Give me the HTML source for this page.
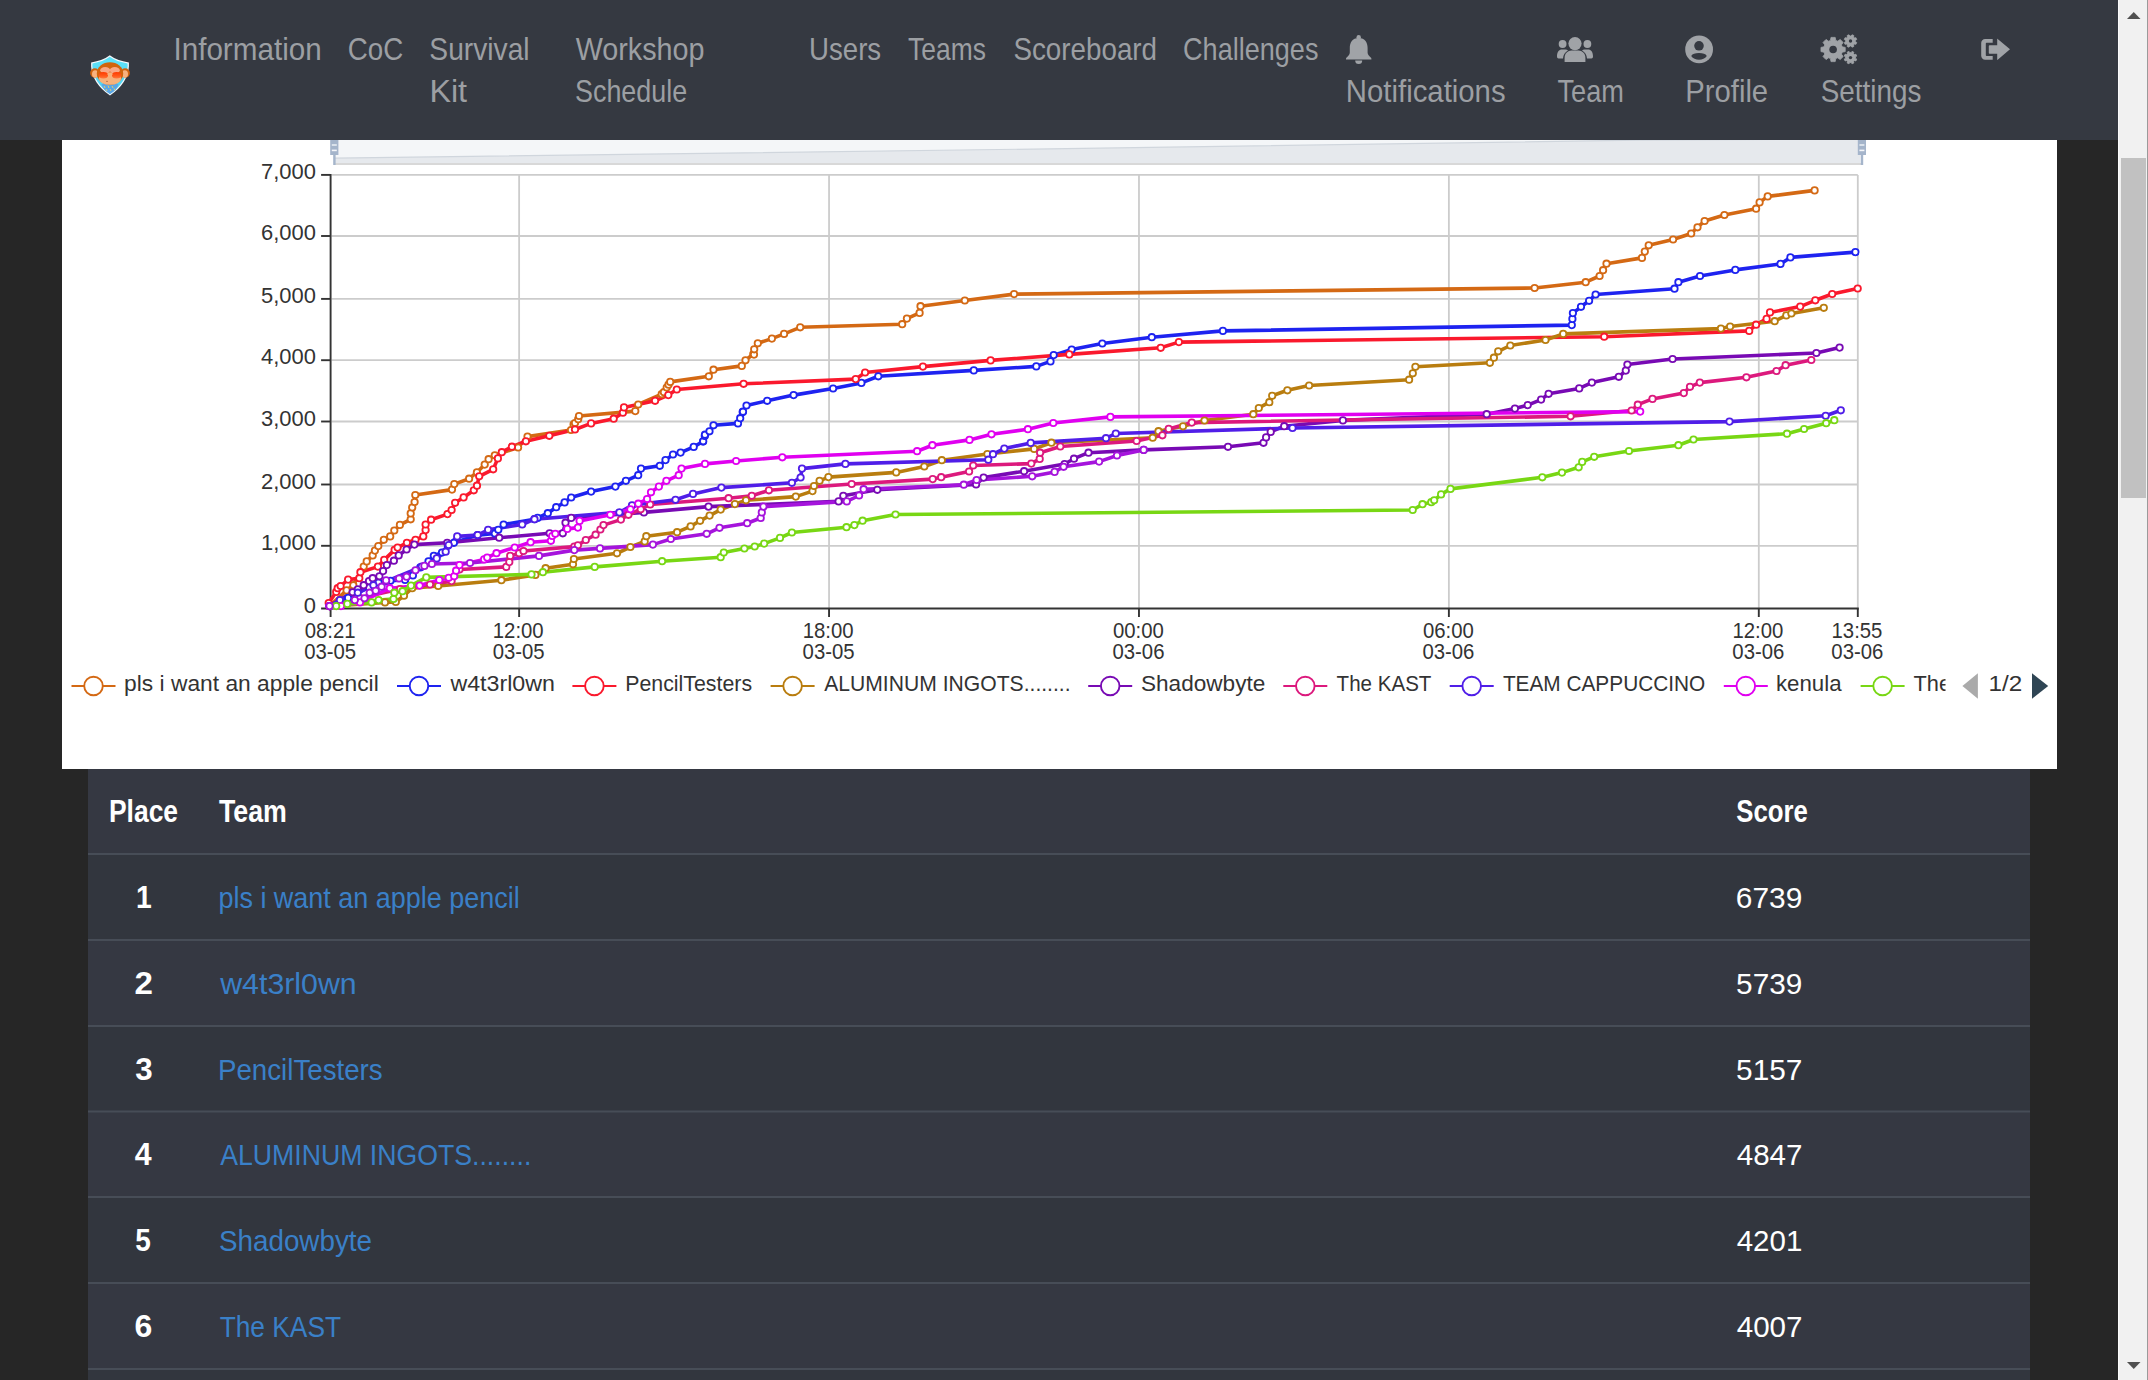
<!DOCTYPE html>
<html><head><meta charset="utf-8"><title>Scoreboard</title><style>
html,body{margin:0;padding:0;width:2148px;height:1380px;overflow:hidden;background:#262626}
svg{position:absolute;left:0;top:0;display:block}
text{font-family:"Liberation Sans", sans-serif;white-space:pre}
</style></head><body>
<svg width="2148" height="1380" viewBox="0 0 2148 1380">
<rect x="0" y="0" width="2118" height="1380" fill="#262626"/>
<rect x="62" y="140" width="1995" height="629" fill="#ffffff"/>
<rect x="88" y="769" width="1942" height="611" fill="#353842"/>
<rect x="335" y="138" width="1526" height="27" fill="#f4f6f8"/>
<path d="M335,158.2 L1100,148.2 L1640,140.2 L1860,139 L1860,164 L335,164 Z" fill="#e6e9ed"/>
<path d="M335,158.2 L1100,148.2 L1640,140.2 L1860,139" stroke="#d0d6dd" stroke-width="1.2" fill="none"/>
<rect x="335" y="163" width="1526" height="2" fill="#d8d8d8"/>
<rect x="330.2" y="136" width="8.2" height="19" fill="#a5b5cb"/>
<rect x="333.2" y="150" width="2.4" height="15" fill="#a5b5cb"/>
<rect x="331.8" y="144.2" width="5" height="1.6" fill="#e8edf3"/>
<rect x="331.8" y="149.6" width="5" height="1.6" fill="#f4f6f9"/>
<rect x="1857.8" y="136" width="8.2" height="19" fill="#a5b5cb"/>
<rect x="1860.8" y="150" width="2.4" height="15" fill="#a5b5cb"/>
<rect x="1859.3999999999999" y="144.2" width="5" height="1.6" fill="#e8edf3"/>
<rect x="1859.3999999999999" y="149.6" width="5" height="1.6" fill="#f4f6f9"/>
<line x1="331.6" y1="545.80" x2="1857.8" y2="545.80" stroke="#cccccc" stroke-width="1.8"/>
<line x1="331.6" y1="484.50" x2="1857.8" y2="484.50" stroke="#cccccc" stroke-width="1.8"/>
<line x1="331.6" y1="421.50" x2="1857.8" y2="421.50" stroke="#cccccc" stroke-width="1.8"/>
<line x1="331.6" y1="360.20" x2="1857.8" y2="360.20" stroke="#cccccc" stroke-width="1.8"/>
<line x1="331.6" y1="298.90" x2="1857.8" y2="298.90" stroke="#cccccc" stroke-width="1.8"/>
<line x1="331.6" y1="236.00" x2="1857.8" y2="236.00" stroke="#cccccc" stroke-width="1.8"/>
<line x1="331.6" y1="174.90" x2="1857.8" y2="174.90" stroke="#cccccc" stroke-width="1.8"/>
<line x1="519.13" y1="174.90" x2="519.13" y2="608.50" stroke="#cccccc" stroke-width="1.8"/>
<line x1="829.05" y1="174.90" x2="829.05" y2="608.50" stroke="#cccccc" stroke-width="1.8"/>
<line x1="1138.97" y1="174.90" x2="1138.97" y2="608.50" stroke="#cccccc" stroke-width="1.8"/>
<line x1="1448.88" y1="174.90" x2="1448.88" y2="608.50" stroke="#cccccc" stroke-width="1.8"/>
<line x1="1758.80" y1="174.90" x2="1758.80" y2="608.50" stroke="#cccccc" stroke-width="1.8"/>
<line x1="1857.80" y1="174.90" x2="1857.80" y2="608.50" stroke="#cccccc" stroke-width="1.8"/>
<line x1="330.6" y1="173.90" x2="330.6" y2="617.0" stroke="#333" stroke-width="1.9"/>
<line x1="321.1" y1="608.5" x2="1858.8" y2="608.5" stroke="#333" stroke-width="1.9"/>
<line x1="321.1" y1="545.80" x2="330.6" y2="545.80" stroke="#333" stroke-width="1.9"/>
<line x1="321.1" y1="484.50" x2="330.6" y2="484.50" stroke="#333" stroke-width="1.9"/>
<line x1="321.1" y1="421.50" x2="330.6" y2="421.50" stroke="#333" stroke-width="1.9"/>
<line x1="321.1" y1="360.20" x2="330.6" y2="360.20" stroke="#333" stroke-width="1.9"/>
<line x1="321.1" y1="298.90" x2="330.6" y2="298.90" stroke="#333" stroke-width="1.9"/>
<line x1="321.1" y1="236.00" x2="330.6" y2="236.00" stroke="#333" stroke-width="1.9"/>
<line x1="321.1" y1="174.90" x2="330.6" y2="174.90" stroke="#333" stroke-width="1.9"/>
<polyline points="329.5,606.1 346.6,590.4 353.3,585.2 363.7,566.6 366.7,561.4 372.7,555.4 374.9,550.6 378.3,546.1 383.8,539.8 390.2,536.4 394.3,530.5 399.9,524.9 410.7,519.3 410.7,513.4 412.2,507.5 414.6,502.0 415.3,495.0 452.0,489.6 454.3,484.1 469.1,478.7 476.9,472.4 484.7,464.6 488.6,459.2 494.8,455.3 518.1,447.5 527.5,436.6 571.0,430.0 573.6,424.4 575.0,423.0 578.2,419.2 579.0,416.0 635.3,411.1 638.2,404.5 661.7,394.2 663.9,392.2 666.7,387.5 668.5,384.7 670.2,381.9 708.8,376.3 713.5,369.7 741.8,365.9 745.5,360.3 753.3,354.0 754.0,354.6 754.2,349.3 757.8,343.3 771.9,338.6 784.1,333.9 800.2,327.3 902.2,324.2 906.9,318.6 919.6,312.9 920.5,306.2 964.8,300.5 1014.1,294.1 1534.6,288.0 1585.7,282.2 1599.6,276.0 1603.1,270.2 1606.5,263.7 1642.0,257.9 1644.8,251.6 1648.7,245.3 1673.1,239.5 1691.2,233.5 1697.5,227.3 1704.6,221.0 1724.4,215.0 1756.1,208.7 1759.6,202.4 1767.7,196.4 1814.6,190.4" fill="none" stroke="#d46914" stroke-width="3.6" stroke-linejoin="round" stroke-linecap="round"/>
<polyline points="329.5,606.1 348.1,597.9 369.0,587.5 378.6,582.6 390.5,580.8 405.1,580.0 412.9,575.5 420.3,567.4 428.5,561.4 433.8,555.8 442.0,552.5 447.9,545.8 453.9,542.8 477.5,535.1 494.8,533.5 498.3,529.8 503.6,524.5 534.5,519.2 537.6,517.9 547.8,513.2 556.2,507.2 564.6,502.4 571.2,497.5 591.1,491.6 615.4,486.6 625.9,480.8 638.2,475.2 641.0,468.6 659.8,465.8 665.5,460.1 673.0,454.5 680.6,452.6 693.7,446.9 703.0,441.5 703.2,441.3 704.8,436.0 705.0,434.7 709.5,431.3 713.5,425.3 738.0,423.4 740.2,418.2 742.7,412.1 743.0,411.7 746.5,405.5 767.2,400.8 793.6,395.1 833.1,388.5 861.4,382.9 878.3,376.3 973.8,370.4 1036.3,366.4 1050.5,361.4 1053.7,355.1 1071.7,349.5 1102.3,343.5 1151.8,337.2 1222.9,330.9 1571.8,325.1 1572.4,318.9 1572.9,313.1 1581.0,306.8 1589.1,300.8 1595.6,294.5 1674.5,288.7 1678.4,282.2 1700.0,276.0 1735.3,269.9 1780.5,263.9 1790.4,257.4 1855.4,252.1" fill="none" stroke="#1e23f0" stroke-width="3.6" stroke-linejoin="round" stroke-linecap="round"/>
<polyline points="328.7,603.0 336.2,591.9 337.7,588.2 340.6,586.0 348.1,579.6 359.3,578.2 360.4,572.2 377.9,566.6 384.2,559.9 394.6,549.9 397.6,547.6 406.9,542.8 415.5,539.8 423.3,536.4 425.6,530.1 425.6,524.5 431.1,519.7 447.5,514.1 451.6,510.0 455.1,502.8 463.6,497.4 473.8,490.3 477.0,485.7 479.2,476.3 493.2,469.3 497.9,458.4 501.8,452.2 511.9,446.7 525.9,441.3 549.3,435.8 575.0,429.5 591.1,423.4 613.7,418.7 622.9,412.7 624.0,407.4 655.1,400.8 668.3,395.1 676.8,389.5 743.6,383.8 855.7,379.1 865.1,372.5 922.9,366.6 990.6,360.4 1069.3,354.4 1160.7,347.8 1178.9,342.1 1604.2,336.7 1749.2,330.9 1756.1,324.7 1766.6,318.9 1770.0,312.4 1800.2,306.6 1815.3,300.3 1832.2,294.0 1857.7,288.5" fill="none" stroke="#fa192d" stroke-width="3.6" stroke-linejoin="round" stroke-linecap="round"/>
<polyline points="329.5,606.1 385.0,602.4 395.8,602.0 404.0,595.7 412.2,588.2 438.2,586.0 501.4,580.2 535.4,574.9 545.6,568.2 573.0,564.3 573.9,559.0 617.0,553.3 630.4,547.0 644.7,541.4 646.3,536.2 677.1,532.2 690.6,526.4 700.1,520.8 709.6,515.6 720.7,509.6 734.9,504.1 746.0,500.3 795.8,496.6 812.5,491.1 814.0,486.0 819.6,480.8 828.4,477.1 896.2,472.4 924.3,466.5 941.8,460.2 987.4,454.0 1034.1,448.9 1051.4,442.7 1152.7,437.7 1158.5,431.2 1183.0,426.3 1204.5,420.5 1253.3,414.2 1258.8,408.0 1269.3,402.2 1272.2,395.8 1287.4,390.3 1309.1,385.5 1409.1,379.7 1412.8,373.3 1415.4,366.8 1489.9,362.8 1493.9,357.7 1498.2,351.3 1510.3,345.5 1545.5,340.0 1563.2,333.9 1720.9,328.6 1730.1,326.5 1774.7,321.2 1786.3,315.4 1791.4,313.5 1823.8,307.8" fill="none" stroke="#b97d0f" stroke-width="3.6" stroke-linejoin="round" stroke-linecap="round"/>
<polyline points="329.5,606.1 352.6,592.3 357.8,589.3 363.7,585.2 369.0,581.1 372.7,578.2 379.4,576.3 383.1,571.1 386.8,565.1 393.9,560.7 398.7,555.4 406.6,549.5 414.4,544.6 447.2,542.8 499.2,537.7 549.6,533.3 562.8,533.3 565.5,522.7 571.2,517.9 643.9,512.4 708.5,506.6 838.6,501.4 843.3,495.8 877.3,489.8 976.1,484.4 983.6,477.6 1024.1,471.2 1064.6,464.0 1074.0,458.7 1088.5,452.7 1143.7,449.9 1228.0,446.8 1263.5,442.8 1266.1,437.4 1270.7,431.9 1284.2,426.2 1342.9,420.4 1486.7,414.2 1514.9,408.6 1527.7,405.1 1541.1,399.6 1548.6,393.8 1579.2,388.4 1591.9,382.6 1618.8,376.8 1625.8,370.6 1627.4,364.5 1672.6,359.0 1816.4,353.0 1839.6,347.6" fill="none" stroke="#780ab4" stroke-width="3.6" stroke-linejoin="round" stroke-linecap="round"/>
<polyline points="329.5,606.1 360.0,598.0 400.0,589.0 430.0,584.5 451.6,581.1 459.5,569.5 506.3,566.9 509.3,562.1 510.2,555.9 519.1,553.2 523.5,551.0 574.3,546.6 577.9,545.3 585.8,540.0 595.6,534.7 600.4,529.5 603.5,525.1 620.9,519.6 628.4,514.8 640.7,509.3 650.2,504.5 728.6,498.2 751.8,495.8 768.9,490.3 851.7,484.0 932.7,479.1 941.2,477.2 969.1,471.5 973.2,465.5 1031.3,463.6 1039.7,458.9 1040.1,452.7 1060.3,446.5 1136.6,441.0 1162.4,435.3 1168.7,428.9 1191.8,422.6 1570.6,416.3 1631.6,410.5 1637.8,404.7 1652.5,398.9 1683.8,393.1 1690.0,386.8 1699.8,382.6 1746.4,377.3 1776.5,371.0 1785.6,365.2 1811.3,360.0" fill="none" stroke="#dc197d" stroke-width="3.6" stroke-linejoin="round" stroke-linecap="round"/>
<polyline points="329.5,606.1 339.9,600.1 357.8,592.7 373.4,585.2 386.1,581.5 421.8,566.6 436.7,558.4 445.7,551.7 448.7,545.0 457.2,536.4 477.7,535.0 488.1,529.8 522.2,524.5 534.5,519.2 619.4,512.4 632.0,505.3 675.5,499.8 693.0,493.9 721.4,487.6 791.9,482.8 800.6,477.5 802.0,468.6 845.4,463.9 988.3,459.7 993.0,454.2 1004.3,448.6 1030.7,442.9 1106.0,438.2 1115.8,433.5 1292.5,428.0 1729.5,421.6 1825.7,415.8 1840.8,410.3" fill="none" stroke="#501ee8" stroke-width="3.6" stroke-linejoin="round" stroke-linecap="round"/>
<polyline points="329.5,606.1 341.0,606.1 360.0,602.4 389.8,588.2 419.6,585.6 439.3,580.0 448.7,577.8 454.2,576.3 456.1,570.7 459.5,565.1 484.1,559.4 487.2,557.6 496.5,553.2 514.7,547.5 530.6,542.2 550.9,540.8 552.2,536.0 555.3,533.8 567.3,528.9 577.9,527.6 579.6,520.9 610.3,514.8 630.4,509.3 638.3,503.7 647.1,499.0 651.0,492.3 658.9,486.6 666.4,480.8 678.7,475.2 681.5,468.6 705.0,463.9 736.1,461.0 782.3,457.3 917.1,451.2 932.4,445.2 969.5,439.9 991.5,434.3 1027.9,429.2 1053.3,423.0 1110.4,416.9 1640.2,411.6" fill="none" stroke="#e000f0" stroke-width="3.6" stroke-linejoin="round" stroke-linecap="round"/>
<polyline points="336.2,606.1 347.3,603.9 371.6,602.4 378.6,600.1 393.5,599.0 394.3,592.7 402.5,591.2 411.0,585.6 426.3,577.4 531.5,574.4 542.9,572.2 594.7,566.9 662.1,561.2 720.7,557.2 723.8,552.5 744.4,548.5 754.7,546.5 764.2,543.6 780.0,537.9 791.9,532.5 846.5,527.2 854.4,525.1 862.6,520.7 895.5,514.5 1412.7,510.0 1422.5,504.2 1431.3,502.2 1434.2,500.3 1441.1,494.4 1450.5,488.9 1542.3,477.3 1562.0,472.6 1578.7,467.3 1582.2,461.9 1594.2,456.8 1629.0,451.0 1678.4,445.2 1693.5,439.5 1787.0,433.7 1804.1,429.0 1826.2,423.2 1834.3,420.2" fill="none" stroke="#78d714" stroke-width="3.6" stroke-linejoin="round" stroke-linecap="round"/>
<polyline points="329.5,606.1 354.8,600.1 364.5,598.3 369.7,592.7 375.7,590.8 381.6,586.7 386.1,580.4 399.1,578.5 406.6,576.7 415.5,570.3 424.4,565.9 431.9,564.0 470.0,563.0 539.0,555.9 574.3,550.1 600.0,548.4 652.9,544.6 670.8,539.0 706.7,533.8 719.5,527.8 747.2,523.2 760.7,518.0 761.8,512.4 763.4,506.6 846.8,501.4 859.1,495.5 863.6,489.2 963.8,484.7 976.6,480.0 1032.2,476.3 1054.6,471.9 1063.6,466.8 1099.1,461.6 1117.0,455.5 1143.7,449.9" fill="none" stroke="#a514dc" stroke-width="3.6" stroke-linejoin="round" stroke-linecap="round"/>
<circle cx="329.5" cy="606.1" r="3.2" fill="#fff" stroke="#d46914" stroke-width="1.8"/>
<circle cx="346.6" cy="590.4" r="3.2" fill="#fff" stroke="#d46914" stroke-width="1.8"/>
<circle cx="353.3" cy="585.2" r="3.2" fill="#fff" stroke="#d46914" stroke-width="1.8"/>
<circle cx="363.7" cy="566.6" r="3.2" fill="#fff" stroke="#d46914" stroke-width="1.8"/>
<circle cx="366.7" cy="561.4" r="3.2" fill="#fff" stroke="#d46914" stroke-width="1.8"/>
<circle cx="372.7" cy="555.4" r="3.2" fill="#fff" stroke="#d46914" stroke-width="1.8"/>
<circle cx="374.9" cy="550.6" r="3.2" fill="#fff" stroke="#d46914" stroke-width="1.8"/>
<circle cx="378.3" cy="546.1" r="3.2" fill="#fff" stroke="#d46914" stroke-width="1.8"/>
<circle cx="383.8" cy="539.8" r="3.2" fill="#fff" stroke="#d46914" stroke-width="1.8"/>
<circle cx="390.2" cy="536.4" r="3.2" fill="#fff" stroke="#d46914" stroke-width="1.8"/>
<circle cx="394.3" cy="530.5" r="3.2" fill="#fff" stroke="#d46914" stroke-width="1.8"/>
<circle cx="399.9" cy="524.9" r="3.2" fill="#fff" stroke="#d46914" stroke-width="1.8"/>
<circle cx="410.7" cy="519.3" r="3.2" fill="#fff" stroke="#d46914" stroke-width="1.8"/>
<circle cx="410.7" cy="513.4" r="3.2" fill="#fff" stroke="#d46914" stroke-width="1.8"/>
<circle cx="412.2" cy="507.5" r="3.2" fill="#fff" stroke="#d46914" stroke-width="1.8"/>
<circle cx="414.6" cy="502.0" r="3.2" fill="#fff" stroke="#d46914" stroke-width="1.8"/>
<circle cx="415.3" cy="495.0" r="3.2" fill="#fff" stroke="#d46914" stroke-width="1.8"/>
<circle cx="452.0" cy="489.6" r="3.2" fill="#fff" stroke="#d46914" stroke-width="1.8"/>
<circle cx="454.3" cy="484.1" r="3.2" fill="#fff" stroke="#d46914" stroke-width="1.8"/>
<circle cx="469.1" cy="478.7" r="3.2" fill="#fff" stroke="#d46914" stroke-width="1.8"/>
<circle cx="476.9" cy="472.4" r="3.2" fill="#fff" stroke="#d46914" stroke-width="1.8"/>
<circle cx="484.7" cy="464.6" r="3.2" fill="#fff" stroke="#d46914" stroke-width="1.8"/>
<circle cx="488.6" cy="459.2" r="3.2" fill="#fff" stroke="#d46914" stroke-width="1.8"/>
<circle cx="494.8" cy="455.3" r="3.2" fill="#fff" stroke="#d46914" stroke-width="1.8"/>
<circle cx="518.1" cy="447.5" r="3.2" fill="#fff" stroke="#d46914" stroke-width="1.8"/>
<circle cx="527.5" cy="436.6" r="3.2" fill="#fff" stroke="#d46914" stroke-width="1.8"/>
<circle cx="571.0" cy="430.0" r="3.2" fill="#fff" stroke="#d46914" stroke-width="1.8"/>
<circle cx="573.6" cy="424.4" r="3.2" fill="#fff" stroke="#d46914" stroke-width="1.8"/>
<circle cx="575.0" cy="423.0" r="3.2" fill="#fff" stroke="#d46914" stroke-width="1.8"/>
<circle cx="578.2" cy="419.2" r="3.2" fill="#fff" stroke="#d46914" stroke-width="1.8"/>
<circle cx="579.0" cy="416.0" r="3.2" fill="#fff" stroke="#d46914" stroke-width="1.8"/>
<circle cx="635.3" cy="411.1" r="3.2" fill="#fff" stroke="#d46914" stroke-width="1.8"/>
<circle cx="638.2" cy="404.5" r="3.2" fill="#fff" stroke="#d46914" stroke-width="1.8"/>
<circle cx="661.7" cy="394.2" r="3.2" fill="#fff" stroke="#d46914" stroke-width="1.8"/>
<circle cx="663.9" cy="392.2" r="3.2" fill="#fff" stroke="#d46914" stroke-width="1.8"/>
<circle cx="666.7" cy="387.5" r="3.2" fill="#fff" stroke="#d46914" stroke-width="1.8"/>
<circle cx="668.5" cy="384.7" r="3.2" fill="#fff" stroke="#d46914" stroke-width="1.8"/>
<circle cx="670.2" cy="381.9" r="3.2" fill="#fff" stroke="#d46914" stroke-width="1.8"/>
<circle cx="708.8" cy="376.3" r="3.2" fill="#fff" stroke="#d46914" stroke-width="1.8"/>
<circle cx="713.5" cy="369.7" r="3.2" fill="#fff" stroke="#d46914" stroke-width="1.8"/>
<circle cx="741.8" cy="365.9" r="3.2" fill="#fff" stroke="#d46914" stroke-width="1.8"/>
<circle cx="745.5" cy="360.3" r="3.2" fill="#fff" stroke="#d46914" stroke-width="1.8"/>
<circle cx="753.3" cy="354.0" r="3.2" fill="#fff" stroke="#d46914" stroke-width="1.8"/>
<circle cx="754.0" cy="354.6" r="3.2" fill="#fff" stroke="#d46914" stroke-width="1.8"/>
<circle cx="754.2" cy="349.3" r="3.2" fill="#fff" stroke="#d46914" stroke-width="1.8"/>
<circle cx="757.8" cy="343.3" r="3.2" fill="#fff" stroke="#d46914" stroke-width="1.8"/>
<circle cx="771.9" cy="338.6" r="3.2" fill="#fff" stroke="#d46914" stroke-width="1.8"/>
<circle cx="784.1" cy="333.9" r="3.2" fill="#fff" stroke="#d46914" stroke-width="1.8"/>
<circle cx="800.2" cy="327.3" r="3.2" fill="#fff" stroke="#d46914" stroke-width="1.8"/>
<circle cx="902.2" cy="324.2" r="3.2" fill="#fff" stroke="#d46914" stroke-width="1.8"/>
<circle cx="906.9" cy="318.6" r="3.2" fill="#fff" stroke="#d46914" stroke-width="1.8"/>
<circle cx="919.6" cy="312.9" r="3.2" fill="#fff" stroke="#d46914" stroke-width="1.8"/>
<circle cx="920.5" cy="306.2" r="3.2" fill="#fff" stroke="#d46914" stroke-width="1.8"/>
<circle cx="964.8" cy="300.5" r="3.2" fill="#fff" stroke="#d46914" stroke-width="1.8"/>
<circle cx="1014.1" cy="294.1" r="3.2" fill="#fff" stroke="#d46914" stroke-width="1.8"/>
<circle cx="1534.6" cy="288.0" r="3.2" fill="#fff" stroke="#d46914" stroke-width="1.8"/>
<circle cx="1585.7" cy="282.2" r="3.2" fill="#fff" stroke="#d46914" stroke-width="1.8"/>
<circle cx="1599.6" cy="276.0" r="3.2" fill="#fff" stroke="#d46914" stroke-width="1.8"/>
<circle cx="1603.1" cy="270.2" r="3.2" fill="#fff" stroke="#d46914" stroke-width="1.8"/>
<circle cx="1606.5" cy="263.7" r="3.2" fill="#fff" stroke="#d46914" stroke-width="1.8"/>
<circle cx="1642.0" cy="257.9" r="3.2" fill="#fff" stroke="#d46914" stroke-width="1.8"/>
<circle cx="1644.8" cy="251.6" r="3.2" fill="#fff" stroke="#d46914" stroke-width="1.8"/>
<circle cx="1648.7" cy="245.3" r="3.2" fill="#fff" stroke="#d46914" stroke-width="1.8"/>
<circle cx="1673.1" cy="239.5" r="3.2" fill="#fff" stroke="#d46914" stroke-width="1.8"/>
<circle cx="1691.2" cy="233.5" r="3.2" fill="#fff" stroke="#d46914" stroke-width="1.8"/>
<circle cx="1697.5" cy="227.3" r="3.2" fill="#fff" stroke="#d46914" stroke-width="1.8"/>
<circle cx="1704.6" cy="221.0" r="3.2" fill="#fff" stroke="#d46914" stroke-width="1.8"/>
<circle cx="1724.4" cy="215.0" r="3.2" fill="#fff" stroke="#d46914" stroke-width="1.8"/>
<circle cx="1756.1" cy="208.7" r="3.2" fill="#fff" stroke="#d46914" stroke-width="1.8"/>
<circle cx="1759.6" cy="202.4" r="3.2" fill="#fff" stroke="#d46914" stroke-width="1.8"/>
<circle cx="1767.7" cy="196.4" r="3.2" fill="#fff" stroke="#d46914" stroke-width="1.8"/>
<circle cx="1814.6" cy="190.4" r="3.2" fill="#fff" stroke="#d46914" stroke-width="1.8"/>
<circle cx="329.5" cy="606.1" r="3.2" fill="#fff" stroke="#1e23f0" stroke-width="1.8"/>
<circle cx="348.1" cy="597.9" r="3.2" fill="#fff" stroke="#1e23f0" stroke-width="1.8"/>
<circle cx="369.0" cy="587.5" r="3.2" fill="#fff" stroke="#1e23f0" stroke-width="1.8"/>
<circle cx="378.6" cy="582.6" r="3.2" fill="#fff" stroke="#1e23f0" stroke-width="1.8"/>
<circle cx="390.5" cy="580.8" r="3.2" fill="#fff" stroke="#1e23f0" stroke-width="1.8"/>
<circle cx="405.1" cy="580.0" r="3.2" fill="#fff" stroke="#1e23f0" stroke-width="1.8"/>
<circle cx="412.9" cy="575.5" r="3.2" fill="#fff" stroke="#1e23f0" stroke-width="1.8"/>
<circle cx="420.3" cy="567.4" r="3.2" fill="#fff" stroke="#1e23f0" stroke-width="1.8"/>
<circle cx="428.5" cy="561.4" r="3.2" fill="#fff" stroke="#1e23f0" stroke-width="1.8"/>
<circle cx="433.8" cy="555.8" r="3.2" fill="#fff" stroke="#1e23f0" stroke-width="1.8"/>
<circle cx="442.0" cy="552.5" r="3.2" fill="#fff" stroke="#1e23f0" stroke-width="1.8"/>
<circle cx="447.9" cy="545.8" r="3.2" fill="#fff" stroke="#1e23f0" stroke-width="1.8"/>
<circle cx="453.9" cy="542.8" r="3.2" fill="#fff" stroke="#1e23f0" stroke-width="1.8"/>
<circle cx="477.5" cy="535.1" r="3.2" fill="#fff" stroke="#1e23f0" stroke-width="1.8"/>
<circle cx="494.8" cy="533.5" r="3.2" fill="#fff" stroke="#1e23f0" stroke-width="1.8"/>
<circle cx="498.3" cy="529.8" r="3.2" fill="#fff" stroke="#1e23f0" stroke-width="1.8"/>
<circle cx="503.6" cy="524.5" r="3.2" fill="#fff" stroke="#1e23f0" stroke-width="1.8"/>
<circle cx="534.5" cy="519.2" r="3.2" fill="#fff" stroke="#1e23f0" stroke-width="1.8"/>
<circle cx="537.6" cy="517.9" r="3.2" fill="#fff" stroke="#1e23f0" stroke-width="1.8"/>
<circle cx="547.8" cy="513.2" r="3.2" fill="#fff" stroke="#1e23f0" stroke-width="1.8"/>
<circle cx="556.2" cy="507.2" r="3.2" fill="#fff" stroke="#1e23f0" stroke-width="1.8"/>
<circle cx="564.6" cy="502.4" r="3.2" fill="#fff" stroke="#1e23f0" stroke-width="1.8"/>
<circle cx="571.2" cy="497.5" r="3.2" fill="#fff" stroke="#1e23f0" stroke-width="1.8"/>
<circle cx="591.1" cy="491.6" r="3.2" fill="#fff" stroke="#1e23f0" stroke-width="1.8"/>
<circle cx="615.4" cy="486.6" r="3.2" fill="#fff" stroke="#1e23f0" stroke-width="1.8"/>
<circle cx="625.9" cy="480.8" r="3.2" fill="#fff" stroke="#1e23f0" stroke-width="1.8"/>
<circle cx="638.2" cy="475.2" r="3.2" fill="#fff" stroke="#1e23f0" stroke-width="1.8"/>
<circle cx="641.0" cy="468.6" r="3.2" fill="#fff" stroke="#1e23f0" stroke-width="1.8"/>
<circle cx="659.8" cy="465.8" r="3.2" fill="#fff" stroke="#1e23f0" stroke-width="1.8"/>
<circle cx="665.5" cy="460.1" r="3.2" fill="#fff" stroke="#1e23f0" stroke-width="1.8"/>
<circle cx="673.0" cy="454.5" r="3.2" fill="#fff" stroke="#1e23f0" stroke-width="1.8"/>
<circle cx="680.6" cy="452.6" r="3.2" fill="#fff" stroke="#1e23f0" stroke-width="1.8"/>
<circle cx="693.7" cy="446.9" r="3.2" fill="#fff" stroke="#1e23f0" stroke-width="1.8"/>
<circle cx="703.0" cy="441.5" r="3.2" fill="#fff" stroke="#1e23f0" stroke-width="1.8"/>
<circle cx="703.2" cy="441.3" r="3.2" fill="#fff" stroke="#1e23f0" stroke-width="1.8"/>
<circle cx="704.8" cy="436.0" r="3.2" fill="#fff" stroke="#1e23f0" stroke-width="1.8"/>
<circle cx="705.0" cy="434.7" r="3.2" fill="#fff" stroke="#1e23f0" stroke-width="1.8"/>
<circle cx="709.5" cy="431.3" r="3.2" fill="#fff" stroke="#1e23f0" stroke-width="1.8"/>
<circle cx="713.5" cy="425.3" r="3.2" fill="#fff" stroke="#1e23f0" stroke-width="1.8"/>
<circle cx="738.0" cy="423.4" r="3.2" fill="#fff" stroke="#1e23f0" stroke-width="1.8"/>
<circle cx="740.2" cy="418.2" r="3.2" fill="#fff" stroke="#1e23f0" stroke-width="1.8"/>
<circle cx="742.7" cy="412.1" r="3.2" fill="#fff" stroke="#1e23f0" stroke-width="1.8"/>
<circle cx="743.0" cy="411.7" r="3.2" fill="#fff" stroke="#1e23f0" stroke-width="1.8"/>
<circle cx="746.5" cy="405.5" r="3.2" fill="#fff" stroke="#1e23f0" stroke-width="1.8"/>
<circle cx="767.2" cy="400.8" r="3.2" fill="#fff" stroke="#1e23f0" stroke-width="1.8"/>
<circle cx="793.6" cy="395.1" r="3.2" fill="#fff" stroke="#1e23f0" stroke-width="1.8"/>
<circle cx="833.1" cy="388.5" r="3.2" fill="#fff" stroke="#1e23f0" stroke-width="1.8"/>
<circle cx="861.4" cy="382.9" r="3.2" fill="#fff" stroke="#1e23f0" stroke-width="1.8"/>
<circle cx="878.3" cy="376.3" r="3.2" fill="#fff" stroke="#1e23f0" stroke-width="1.8"/>
<circle cx="973.8" cy="370.4" r="3.2" fill="#fff" stroke="#1e23f0" stroke-width="1.8"/>
<circle cx="1036.3" cy="366.4" r="3.2" fill="#fff" stroke="#1e23f0" stroke-width="1.8"/>
<circle cx="1050.5" cy="361.4" r="3.2" fill="#fff" stroke="#1e23f0" stroke-width="1.8"/>
<circle cx="1053.7" cy="355.1" r="3.2" fill="#fff" stroke="#1e23f0" stroke-width="1.8"/>
<circle cx="1071.7" cy="349.5" r="3.2" fill="#fff" stroke="#1e23f0" stroke-width="1.8"/>
<circle cx="1102.3" cy="343.5" r="3.2" fill="#fff" stroke="#1e23f0" stroke-width="1.8"/>
<circle cx="1151.8" cy="337.2" r="3.2" fill="#fff" stroke="#1e23f0" stroke-width="1.8"/>
<circle cx="1222.9" cy="330.9" r="3.2" fill="#fff" stroke="#1e23f0" stroke-width="1.8"/>
<circle cx="1571.8" cy="325.1" r="3.2" fill="#fff" stroke="#1e23f0" stroke-width="1.8"/>
<circle cx="1572.4" cy="318.9" r="3.2" fill="#fff" stroke="#1e23f0" stroke-width="1.8"/>
<circle cx="1572.9" cy="313.1" r="3.2" fill="#fff" stroke="#1e23f0" stroke-width="1.8"/>
<circle cx="1581.0" cy="306.8" r="3.2" fill="#fff" stroke="#1e23f0" stroke-width="1.8"/>
<circle cx="1589.1" cy="300.8" r="3.2" fill="#fff" stroke="#1e23f0" stroke-width="1.8"/>
<circle cx="1595.6" cy="294.5" r="3.2" fill="#fff" stroke="#1e23f0" stroke-width="1.8"/>
<circle cx="1674.5" cy="288.7" r="3.2" fill="#fff" stroke="#1e23f0" stroke-width="1.8"/>
<circle cx="1678.4" cy="282.2" r="3.2" fill="#fff" stroke="#1e23f0" stroke-width="1.8"/>
<circle cx="1700.0" cy="276.0" r="3.2" fill="#fff" stroke="#1e23f0" stroke-width="1.8"/>
<circle cx="1735.3" cy="269.9" r="3.2" fill="#fff" stroke="#1e23f0" stroke-width="1.8"/>
<circle cx="1780.5" cy="263.9" r="3.2" fill="#fff" stroke="#1e23f0" stroke-width="1.8"/>
<circle cx="1790.4" cy="257.4" r="3.2" fill="#fff" stroke="#1e23f0" stroke-width="1.8"/>
<circle cx="1855.4" cy="252.1" r="3.2" fill="#fff" stroke="#1e23f0" stroke-width="1.8"/>
<circle cx="328.7" cy="603.0" r="3.2" fill="#fff" stroke="#fa192d" stroke-width="1.8"/>
<circle cx="336.2" cy="591.9" r="3.2" fill="#fff" stroke="#fa192d" stroke-width="1.8"/>
<circle cx="337.7" cy="588.2" r="3.2" fill="#fff" stroke="#fa192d" stroke-width="1.8"/>
<circle cx="340.6" cy="586.0" r="3.2" fill="#fff" stroke="#fa192d" stroke-width="1.8"/>
<circle cx="348.1" cy="579.6" r="3.2" fill="#fff" stroke="#fa192d" stroke-width="1.8"/>
<circle cx="359.3" cy="578.2" r="3.2" fill="#fff" stroke="#fa192d" stroke-width="1.8"/>
<circle cx="360.4" cy="572.2" r="3.2" fill="#fff" stroke="#fa192d" stroke-width="1.8"/>
<circle cx="377.9" cy="566.6" r="3.2" fill="#fff" stroke="#fa192d" stroke-width="1.8"/>
<circle cx="384.2" cy="559.9" r="3.2" fill="#fff" stroke="#fa192d" stroke-width="1.8"/>
<circle cx="394.6" cy="549.9" r="3.2" fill="#fff" stroke="#fa192d" stroke-width="1.8"/>
<circle cx="397.6" cy="547.6" r="3.2" fill="#fff" stroke="#fa192d" stroke-width="1.8"/>
<circle cx="406.9" cy="542.8" r="3.2" fill="#fff" stroke="#fa192d" stroke-width="1.8"/>
<circle cx="415.5" cy="539.8" r="3.2" fill="#fff" stroke="#fa192d" stroke-width="1.8"/>
<circle cx="423.3" cy="536.4" r="3.2" fill="#fff" stroke="#fa192d" stroke-width="1.8"/>
<circle cx="425.6" cy="530.1" r="3.2" fill="#fff" stroke="#fa192d" stroke-width="1.8"/>
<circle cx="425.6" cy="524.5" r="3.2" fill="#fff" stroke="#fa192d" stroke-width="1.8"/>
<circle cx="431.1" cy="519.7" r="3.2" fill="#fff" stroke="#fa192d" stroke-width="1.8"/>
<circle cx="447.5" cy="514.1" r="3.2" fill="#fff" stroke="#fa192d" stroke-width="1.8"/>
<circle cx="451.6" cy="510.0" r="3.2" fill="#fff" stroke="#fa192d" stroke-width="1.8"/>
<circle cx="455.1" cy="502.8" r="3.2" fill="#fff" stroke="#fa192d" stroke-width="1.8"/>
<circle cx="463.6" cy="497.4" r="3.2" fill="#fff" stroke="#fa192d" stroke-width="1.8"/>
<circle cx="473.8" cy="490.3" r="3.2" fill="#fff" stroke="#fa192d" stroke-width="1.8"/>
<circle cx="477.0" cy="485.7" r="3.2" fill="#fff" stroke="#fa192d" stroke-width="1.8"/>
<circle cx="479.2" cy="476.3" r="3.2" fill="#fff" stroke="#fa192d" stroke-width="1.8"/>
<circle cx="493.2" cy="469.3" r="3.2" fill="#fff" stroke="#fa192d" stroke-width="1.8"/>
<circle cx="497.9" cy="458.4" r="3.2" fill="#fff" stroke="#fa192d" stroke-width="1.8"/>
<circle cx="501.8" cy="452.2" r="3.2" fill="#fff" stroke="#fa192d" stroke-width="1.8"/>
<circle cx="511.9" cy="446.7" r="3.2" fill="#fff" stroke="#fa192d" stroke-width="1.8"/>
<circle cx="525.9" cy="441.3" r="3.2" fill="#fff" stroke="#fa192d" stroke-width="1.8"/>
<circle cx="549.3" cy="435.8" r="3.2" fill="#fff" stroke="#fa192d" stroke-width="1.8"/>
<circle cx="575.0" cy="429.5" r="3.2" fill="#fff" stroke="#fa192d" stroke-width="1.8"/>
<circle cx="591.1" cy="423.4" r="3.2" fill="#fff" stroke="#fa192d" stroke-width="1.8"/>
<circle cx="613.7" cy="418.7" r="3.2" fill="#fff" stroke="#fa192d" stroke-width="1.8"/>
<circle cx="622.9" cy="412.7" r="3.2" fill="#fff" stroke="#fa192d" stroke-width="1.8"/>
<circle cx="624.0" cy="407.4" r="3.2" fill="#fff" stroke="#fa192d" stroke-width="1.8"/>
<circle cx="655.1" cy="400.8" r="3.2" fill="#fff" stroke="#fa192d" stroke-width="1.8"/>
<circle cx="668.3" cy="395.1" r="3.2" fill="#fff" stroke="#fa192d" stroke-width="1.8"/>
<circle cx="676.8" cy="389.5" r="3.2" fill="#fff" stroke="#fa192d" stroke-width="1.8"/>
<circle cx="743.6" cy="383.8" r="3.2" fill="#fff" stroke="#fa192d" stroke-width="1.8"/>
<circle cx="855.7" cy="379.1" r="3.2" fill="#fff" stroke="#fa192d" stroke-width="1.8"/>
<circle cx="865.1" cy="372.5" r="3.2" fill="#fff" stroke="#fa192d" stroke-width="1.8"/>
<circle cx="922.9" cy="366.6" r="3.2" fill="#fff" stroke="#fa192d" stroke-width="1.8"/>
<circle cx="990.6" cy="360.4" r="3.2" fill="#fff" stroke="#fa192d" stroke-width="1.8"/>
<circle cx="1069.3" cy="354.4" r="3.2" fill="#fff" stroke="#fa192d" stroke-width="1.8"/>
<circle cx="1160.7" cy="347.8" r="3.2" fill="#fff" stroke="#fa192d" stroke-width="1.8"/>
<circle cx="1178.9" cy="342.1" r="3.2" fill="#fff" stroke="#fa192d" stroke-width="1.8"/>
<circle cx="1604.2" cy="336.7" r="3.2" fill="#fff" stroke="#fa192d" stroke-width="1.8"/>
<circle cx="1749.2" cy="330.9" r="3.2" fill="#fff" stroke="#fa192d" stroke-width="1.8"/>
<circle cx="1756.1" cy="324.7" r="3.2" fill="#fff" stroke="#fa192d" stroke-width="1.8"/>
<circle cx="1766.6" cy="318.9" r="3.2" fill="#fff" stroke="#fa192d" stroke-width="1.8"/>
<circle cx="1770.0" cy="312.4" r="3.2" fill="#fff" stroke="#fa192d" stroke-width="1.8"/>
<circle cx="1800.2" cy="306.6" r="3.2" fill="#fff" stroke="#fa192d" stroke-width="1.8"/>
<circle cx="1815.3" cy="300.3" r="3.2" fill="#fff" stroke="#fa192d" stroke-width="1.8"/>
<circle cx="1832.2" cy="294.0" r="3.2" fill="#fff" stroke="#fa192d" stroke-width="1.8"/>
<circle cx="1857.7" cy="288.5" r="3.2" fill="#fff" stroke="#fa192d" stroke-width="1.8"/>
<circle cx="329.5" cy="606.1" r="3.2" fill="#fff" stroke="#b97d0f" stroke-width="1.8"/>
<circle cx="385.0" cy="602.4" r="3.2" fill="#fff" stroke="#b97d0f" stroke-width="1.8"/>
<circle cx="395.8" cy="602.0" r="3.2" fill="#fff" stroke="#b97d0f" stroke-width="1.8"/>
<circle cx="404.0" cy="595.7" r="3.2" fill="#fff" stroke="#b97d0f" stroke-width="1.8"/>
<circle cx="412.2" cy="588.2" r="3.2" fill="#fff" stroke="#b97d0f" stroke-width="1.8"/>
<circle cx="438.2" cy="586.0" r="3.2" fill="#fff" stroke="#b97d0f" stroke-width="1.8"/>
<circle cx="501.4" cy="580.2" r="3.2" fill="#fff" stroke="#b97d0f" stroke-width="1.8"/>
<circle cx="535.4" cy="574.9" r="3.2" fill="#fff" stroke="#b97d0f" stroke-width="1.8"/>
<circle cx="545.6" cy="568.2" r="3.2" fill="#fff" stroke="#b97d0f" stroke-width="1.8"/>
<circle cx="573.0" cy="564.3" r="3.2" fill="#fff" stroke="#b97d0f" stroke-width="1.8"/>
<circle cx="573.9" cy="559.0" r="3.2" fill="#fff" stroke="#b97d0f" stroke-width="1.8"/>
<circle cx="617.0" cy="553.3" r="3.2" fill="#fff" stroke="#b97d0f" stroke-width="1.8"/>
<circle cx="630.4" cy="547.0" r="3.2" fill="#fff" stroke="#b97d0f" stroke-width="1.8"/>
<circle cx="644.7" cy="541.4" r="3.2" fill="#fff" stroke="#b97d0f" stroke-width="1.8"/>
<circle cx="646.3" cy="536.2" r="3.2" fill="#fff" stroke="#b97d0f" stroke-width="1.8"/>
<circle cx="677.1" cy="532.2" r="3.2" fill="#fff" stroke="#b97d0f" stroke-width="1.8"/>
<circle cx="690.6" cy="526.4" r="3.2" fill="#fff" stroke="#b97d0f" stroke-width="1.8"/>
<circle cx="700.1" cy="520.8" r="3.2" fill="#fff" stroke="#b97d0f" stroke-width="1.8"/>
<circle cx="709.6" cy="515.6" r="3.2" fill="#fff" stroke="#b97d0f" stroke-width="1.8"/>
<circle cx="720.7" cy="509.6" r="3.2" fill="#fff" stroke="#b97d0f" stroke-width="1.8"/>
<circle cx="734.9" cy="504.1" r="3.2" fill="#fff" stroke="#b97d0f" stroke-width="1.8"/>
<circle cx="746.0" cy="500.3" r="3.2" fill="#fff" stroke="#b97d0f" stroke-width="1.8"/>
<circle cx="795.8" cy="496.6" r="3.2" fill="#fff" stroke="#b97d0f" stroke-width="1.8"/>
<circle cx="812.5" cy="491.1" r="3.2" fill="#fff" stroke="#b97d0f" stroke-width="1.8"/>
<circle cx="814.0" cy="486.0" r="3.2" fill="#fff" stroke="#b97d0f" stroke-width="1.8"/>
<circle cx="819.6" cy="480.8" r="3.2" fill="#fff" stroke="#b97d0f" stroke-width="1.8"/>
<circle cx="828.4" cy="477.1" r="3.2" fill="#fff" stroke="#b97d0f" stroke-width="1.8"/>
<circle cx="896.2" cy="472.4" r="3.2" fill="#fff" stroke="#b97d0f" stroke-width="1.8"/>
<circle cx="924.3" cy="466.5" r="3.2" fill="#fff" stroke="#b97d0f" stroke-width="1.8"/>
<circle cx="941.8" cy="460.2" r="3.2" fill="#fff" stroke="#b97d0f" stroke-width="1.8"/>
<circle cx="987.4" cy="454.0" r="3.2" fill="#fff" stroke="#b97d0f" stroke-width="1.8"/>
<circle cx="1034.1" cy="448.9" r="3.2" fill="#fff" stroke="#b97d0f" stroke-width="1.8"/>
<circle cx="1051.4" cy="442.7" r="3.2" fill="#fff" stroke="#b97d0f" stroke-width="1.8"/>
<circle cx="1152.7" cy="437.7" r="3.2" fill="#fff" stroke="#b97d0f" stroke-width="1.8"/>
<circle cx="1158.5" cy="431.2" r="3.2" fill="#fff" stroke="#b97d0f" stroke-width="1.8"/>
<circle cx="1183.0" cy="426.3" r="3.2" fill="#fff" stroke="#b97d0f" stroke-width="1.8"/>
<circle cx="1204.5" cy="420.5" r="3.2" fill="#fff" stroke="#b97d0f" stroke-width="1.8"/>
<circle cx="1253.3" cy="414.2" r="3.2" fill="#fff" stroke="#b97d0f" stroke-width="1.8"/>
<circle cx="1258.8" cy="408.0" r="3.2" fill="#fff" stroke="#b97d0f" stroke-width="1.8"/>
<circle cx="1269.3" cy="402.2" r="3.2" fill="#fff" stroke="#b97d0f" stroke-width="1.8"/>
<circle cx="1272.2" cy="395.8" r="3.2" fill="#fff" stroke="#b97d0f" stroke-width="1.8"/>
<circle cx="1287.4" cy="390.3" r="3.2" fill="#fff" stroke="#b97d0f" stroke-width="1.8"/>
<circle cx="1309.1" cy="385.5" r="3.2" fill="#fff" stroke="#b97d0f" stroke-width="1.8"/>
<circle cx="1409.1" cy="379.7" r="3.2" fill="#fff" stroke="#b97d0f" stroke-width="1.8"/>
<circle cx="1412.8" cy="373.3" r="3.2" fill="#fff" stroke="#b97d0f" stroke-width="1.8"/>
<circle cx="1415.4" cy="366.8" r="3.2" fill="#fff" stroke="#b97d0f" stroke-width="1.8"/>
<circle cx="1489.9" cy="362.8" r="3.2" fill="#fff" stroke="#b97d0f" stroke-width="1.8"/>
<circle cx="1493.9" cy="357.7" r="3.2" fill="#fff" stroke="#b97d0f" stroke-width="1.8"/>
<circle cx="1498.2" cy="351.3" r="3.2" fill="#fff" stroke="#b97d0f" stroke-width="1.8"/>
<circle cx="1510.3" cy="345.5" r="3.2" fill="#fff" stroke="#b97d0f" stroke-width="1.8"/>
<circle cx="1545.5" cy="340.0" r="3.2" fill="#fff" stroke="#b97d0f" stroke-width="1.8"/>
<circle cx="1563.2" cy="333.9" r="3.2" fill="#fff" stroke="#b97d0f" stroke-width="1.8"/>
<circle cx="1720.9" cy="328.6" r="3.2" fill="#fff" stroke="#b97d0f" stroke-width="1.8"/>
<circle cx="1730.1" cy="326.5" r="3.2" fill="#fff" stroke="#b97d0f" stroke-width="1.8"/>
<circle cx="1774.7" cy="321.2" r="3.2" fill="#fff" stroke="#b97d0f" stroke-width="1.8"/>
<circle cx="1786.3" cy="315.4" r="3.2" fill="#fff" stroke="#b97d0f" stroke-width="1.8"/>
<circle cx="1791.4" cy="313.5" r="3.2" fill="#fff" stroke="#b97d0f" stroke-width="1.8"/>
<circle cx="1823.8" cy="307.8" r="3.2" fill="#fff" stroke="#b97d0f" stroke-width="1.8"/>
<circle cx="329.5" cy="606.1" r="3.2" fill="#fff" stroke="#780ab4" stroke-width="1.8"/>
<circle cx="352.6" cy="592.3" r="3.2" fill="#fff" stroke="#780ab4" stroke-width="1.8"/>
<circle cx="357.8" cy="589.3" r="3.2" fill="#fff" stroke="#780ab4" stroke-width="1.8"/>
<circle cx="363.7" cy="585.2" r="3.2" fill="#fff" stroke="#780ab4" stroke-width="1.8"/>
<circle cx="369.0" cy="581.1" r="3.2" fill="#fff" stroke="#780ab4" stroke-width="1.8"/>
<circle cx="372.7" cy="578.2" r="3.2" fill="#fff" stroke="#780ab4" stroke-width="1.8"/>
<circle cx="379.4" cy="576.3" r="3.2" fill="#fff" stroke="#780ab4" stroke-width="1.8"/>
<circle cx="383.1" cy="571.1" r="3.2" fill="#fff" stroke="#780ab4" stroke-width="1.8"/>
<circle cx="386.8" cy="565.1" r="3.2" fill="#fff" stroke="#780ab4" stroke-width="1.8"/>
<circle cx="393.9" cy="560.7" r="3.2" fill="#fff" stroke="#780ab4" stroke-width="1.8"/>
<circle cx="398.7" cy="555.4" r="3.2" fill="#fff" stroke="#780ab4" stroke-width="1.8"/>
<circle cx="406.6" cy="549.5" r="3.2" fill="#fff" stroke="#780ab4" stroke-width="1.8"/>
<circle cx="414.4" cy="544.6" r="3.2" fill="#fff" stroke="#780ab4" stroke-width="1.8"/>
<circle cx="447.2" cy="542.8" r="3.2" fill="#fff" stroke="#780ab4" stroke-width="1.8"/>
<circle cx="499.2" cy="537.7" r="3.2" fill="#fff" stroke="#780ab4" stroke-width="1.8"/>
<circle cx="549.6" cy="533.3" r="3.2" fill="#fff" stroke="#780ab4" stroke-width="1.8"/>
<circle cx="562.8" cy="533.3" r="3.2" fill="#fff" stroke="#780ab4" stroke-width="1.8"/>
<circle cx="565.5" cy="522.7" r="3.2" fill="#fff" stroke="#780ab4" stroke-width="1.8"/>
<circle cx="571.2" cy="517.9" r="3.2" fill="#fff" stroke="#780ab4" stroke-width="1.8"/>
<circle cx="643.9" cy="512.4" r="3.2" fill="#fff" stroke="#780ab4" stroke-width="1.8"/>
<circle cx="708.5" cy="506.6" r="3.2" fill="#fff" stroke="#780ab4" stroke-width="1.8"/>
<circle cx="838.6" cy="501.4" r="3.2" fill="#fff" stroke="#780ab4" stroke-width="1.8"/>
<circle cx="843.3" cy="495.8" r="3.2" fill="#fff" stroke="#780ab4" stroke-width="1.8"/>
<circle cx="877.3" cy="489.8" r="3.2" fill="#fff" stroke="#780ab4" stroke-width="1.8"/>
<circle cx="976.1" cy="484.4" r="3.2" fill="#fff" stroke="#780ab4" stroke-width="1.8"/>
<circle cx="983.6" cy="477.6" r="3.2" fill="#fff" stroke="#780ab4" stroke-width="1.8"/>
<circle cx="1024.1" cy="471.2" r="3.2" fill="#fff" stroke="#780ab4" stroke-width="1.8"/>
<circle cx="1064.6" cy="464.0" r="3.2" fill="#fff" stroke="#780ab4" stroke-width="1.8"/>
<circle cx="1074.0" cy="458.7" r="3.2" fill="#fff" stroke="#780ab4" stroke-width="1.8"/>
<circle cx="1088.5" cy="452.7" r="3.2" fill="#fff" stroke="#780ab4" stroke-width="1.8"/>
<circle cx="1143.7" cy="449.9" r="3.2" fill="#fff" stroke="#780ab4" stroke-width="1.8"/>
<circle cx="1228.0" cy="446.8" r="3.2" fill="#fff" stroke="#780ab4" stroke-width="1.8"/>
<circle cx="1263.5" cy="442.8" r="3.2" fill="#fff" stroke="#780ab4" stroke-width="1.8"/>
<circle cx="1266.1" cy="437.4" r="3.2" fill="#fff" stroke="#780ab4" stroke-width="1.8"/>
<circle cx="1270.7" cy="431.9" r="3.2" fill="#fff" stroke="#780ab4" stroke-width="1.8"/>
<circle cx="1284.2" cy="426.2" r="3.2" fill="#fff" stroke="#780ab4" stroke-width="1.8"/>
<circle cx="1342.9" cy="420.4" r="3.2" fill="#fff" stroke="#780ab4" stroke-width="1.8"/>
<circle cx="1486.7" cy="414.2" r="3.2" fill="#fff" stroke="#780ab4" stroke-width="1.8"/>
<circle cx="1514.9" cy="408.6" r="3.2" fill="#fff" stroke="#780ab4" stroke-width="1.8"/>
<circle cx="1527.7" cy="405.1" r="3.2" fill="#fff" stroke="#780ab4" stroke-width="1.8"/>
<circle cx="1541.1" cy="399.6" r="3.2" fill="#fff" stroke="#780ab4" stroke-width="1.8"/>
<circle cx="1548.6" cy="393.8" r="3.2" fill="#fff" stroke="#780ab4" stroke-width="1.8"/>
<circle cx="1579.2" cy="388.4" r="3.2" fill="#fff" stroke="#780ab4" stroke-width="1.8"/>
<circle cx="1591.9" cy="382.6" r="3.2" fill="#fff" stroke="#780ab4" stroke-width="1.8"/>
<circle cx="1618.8" cy="376.8" r="3.2" fill="#fff" stroke="#780ab4" stroke-width="1.8"/>
<circle cx="1625.8" cy="370.6" r="3.2" fill="#fff" stroke="#780ab4" stroke-width="1.8"/>
<circle cx="1627.4" cy="364.5" r="3.2" fill="#fff" stroke="#780ab4" stroke-width="1.8"/>
<circle cx="1672.6" cy="359.0" r="3.2" fill="#fff" stroke="#780ab4" stroke-width="1.8"/>
<circle cx="1816.4" cy="353.0" r="3.2" fill="#fff" stroke="#780ab4" stroke-width="1.8"/>
<circle cx="1839.6" cy="347.6" r="3.2" fill="#fff" stroke="#780ab4" stroke-width="1.8"/>
<circle cx="329.5" cy="606.1" r="3.2" fill="#fff" stroke="#dc197d" stroke-width="1.8"/>
<circle cx="360.0" cy="598.0" r="3.2" fill="#fff" stroke="#dc197d" stroke-width="1.8"/>
<circle cx="400.0" cy="589.0" r="3.2" fill="#fff" stroke="#dc197d" stroke-width="1.8"/>
<circle cx="430.0" cy="584.5" r="3.2" fill="#fff" stroke="#dc197d" stroke-width="1.8"/>
<circle cx="451.6" cy="581.1" r="3.2" fill="#fff" stroke="#dc197d" stroke-width="1.8"/>
<circle cx="459.5" cy="569.5" r="3.2" fill="#fff" stroke="#dc197d" stroke-width="1.8"/>
<circle cx="506.3" cy="566.9" r="3.2" fill="#fff" stroke="#dc197d" stroke-width="1.8"/>
<circle cx="509.3" cy="562.1" r="3.2" fill="#fff" stroke="#dc197d" stroke-width="1.8"/>
<circle cx="510.2" cy="555.9" r="3.2" fill="#fff" stroke="#dc197d" stroke-width="1.8"/>
<circle cx="519.1" cy="553.2" r="3.2" fill="#fff" stroke="#dc197d" stroke-width="1.8"/>
<circle cx="523.5" cy="551.0" r="3.2" fill="#fff" stroke="#dc197d" stroke-width="1.8"/>
<circle cx="574.3" cy="546.6" r="3.2" fill="#fff" stroke="#dc197d" stroke-width="1.8"/>
<circle cx="577.9" cy="545.3" r="3.2" fill="#fff" stroke="#dc197d" stroke-width="1.8"/>
<circle cx="585.8" cy="540.0" r="3.2" fill="#fff" stroke="#dc197d" stroke-width="1.8"/>
<circle cx="595.6" cy="534.7" r="3.2" fill="#fff" stroke="#dc197d" stroke-width="1.8"/>
<circle cx="600.4" cy="529.5" r="3.2" fill="#fff" stroke="#dc197d" stroke-width="1.8"/>
<circle cx="603.5" cy="525.1" r="3.2" fill="#fff" stroke="#dc197d" stroke-width="1.8"/>
<circle cx="620.9" cy="519.6" r="3.2" fill="#fff" stroke="#dc197d" stroke-width="1.8"/>
<circle cx="628.4" cy="514.8" r="3.2" fill="#fff" stroke="#dc197d" stroke-width="1.8"/>
<circle cx="640.7" cy="509.3" r="3.2" fill="#fff" stroke="#dc197d" stroke-width="1.8"/>
<circle cx="650.2" cy="504.5" r="3.2" fill="#fff" stroke="#dc197d" stroke-width="1.8"/>
<circle cx="728.6" cy="498.2" r="3.2" fill="#fff" stroke="#dc197d" stroke-width="1.8"/>
<circle cx="751.8" cy="495.8" r="3.2" fill="#fff" stroke="#dc197d" stroke-width="1.8"/>
<circle cx="768.9" cy="490.3" r="3.2" fill="#fff" stroke="#dc197d" stroke-width="1.8"/>
<circle cx="851.7" cy="484.0" r="3.2" fill="#fff" stroke="#dc197d" stroke-width="1.8"/>
<circle cx="932.7" cy="479.1" r="3.2" fill="#fff" stroke="#dc197d" stroke-width="1.8"/>
<circle cx="941.2" cy="477.2" r="3.2" fill="#fff" stroke="#dc197d" stroke-width="1.8"/>
<circle cx="969.1" cy="471.5" r="3.2" fill="#fff" stroke="#dc197d" stroke-width="1.8"/>
<circle cx="973.2" cy="465.5" r="3.2" fill="#fff" stroke="#dc197d" stroke-width="1.8"/>
<circle cx="1031.3" cy="463.6" r="3.2" fill="#fff" stroke="#dc197d" stroke-width="1.8"/>
<circle cx="1039.7" cy="458.9" r="3.2" fill="#fff" stroke="#dc197d" stroke-width="1.8"/>
<circle cx="1040.1" cy="452.7" r="3.2" fill="#fff" stroke="#dc197d" stroke-width="1.8"/>
<circle cx="1060.3" cy="446.5" r="3.2" fill="#fff" stroke="#dc197d" stroke-width="1.8"/>
<circle cx="1136.6" cy="441.0" r="3.2" fill="#fff" stroke="#dc197d" stroke-width="1.8"/>
<circle cx="1162.4" cy="435.3" r="3.2" fill="#fff" stroke="#dc197d" stroke-width="1.8"/>
<circle cx="1168.7" cy="428.9" r="3.2" fill="#fff" stroke="#dc197d" stroke-width="1.8"/>
<circle cx="1191.8" cy="422.6" r="3.2" fill="#fff" stroke="#dc197d" stroke-width="1.8"/>
<circle cx="1570.6" cy="416.3" r="3.2" fill="#fff" stroke="#dc197d" stroke-width="1.8"/>
<circle cx="1631.6" cy="410.5" r="3.2" fill="#fff" stroke="#dc197d" stroke-width="1.8"/>
<circle cx="1637.8" cy="404.7" r="3.2" fill="#fff" stroke="#dc197d" stroke-width="1.8"/>
<circle cx="1652.5" cy="398.9" r="3.2" fill="#fff" stroke="#dc197d" stroke-width="1.8"/>
<circle cx="1683.8" cy="393.1" r="3.2" fill="#fff" stroke="#dc197d" stroke-width="1.8"/>
<circle cx="1690.0" cy="386.8" r="3.2" fill="#fff" stroke="#dc197d" stroke-width="1.8"/>
<circle cx="1699.8" cy="382.6" r="3.2" fill="#fff" stroke="#dc197d" stroke-width="1.8"/>
<circle cx="1746.4" cy="377.3" r="3.2" fill="#fff" stroke="#dc197d" stroke-width="1.8"/>
<circle cx="1776.5" cy="371.0" r="3.2" fill="#fff" stroke="#dc197d" stroke-width="1.8"/>
<circle cx="1785.6" cy="365.2" r="3.2" fill="#fff" stroke="#dc197d" stroke-width="1.8"/>
<circle cx="1811.3" cy="360.0" r="3.2" fill="#fff" stroke="#dc197d" stroke-width="1.8"/>
<circle cx="329.5" cy="606.1" r="3.2" fill="#fff" stroke="#501ee8" stroke-width="1.8"/>
<circle cx="339.9" cy="600.1" r="3.2" fill="#fff" stroke="#501ee8" stroke-width="1.8"/>
<circle cx="357.8" cy="592.7" r="3.2" fill="#fff" stroke="#501ee8" stroke-width="1.8"/>
<circle cx="373.4" cy="585.2" r="3.2" fill="#fff" stroke="#501ee8" stroke-width="1.8"/>
<circle cx="386.1" cy="581.5" r="3.2" fill="#fff" stroke="#501ee8" stroke-width="1.8"/>
<circle cx="421.8" cy="566.6" r="3.2" fill="#fff" stroke="#501ee8" stroke-width="1.8"/>
<circle cx="436.7" cy="558.4" r="3.2" fill="#fff" stroke="#501ee8" stroke-width="1.8"/>
<circle cx="445.7" cy="551.7" r="3.2" fill="#fff" stroke="#501ee8" stroke-width="1.8"/>
<circle cx="448.7" cy="545.0" r="3.2" fill="#fff" stroke="#501ee8" stroke-width="1.8"/>
<circle cx="457.2" cy="536.4" r="3.2" fill="#fff" stroke="#501ee8" stroke-width="1.8"/>
<circle cx="477.7" cy="535.0" r="3.2" fill="#fff" stroke="#501ee8" stroke-width="1.8"/>
<circle cx="488.1" cy="529.8" r="3.2" fill="#fff" stroke="#501ee8" stroke-width="1.8"/>
<circle cx="522.2" cy="524.5" r="3.2" fill="#fff" stroke="#501ee8" stroke-width="1.8"/>
<circle cx="534.5" cy="519.2" r="3.2" fill="#fff" stroke="#501ee8" stroke-width="1.8"/>
<circle cx="619.4" cy="512.4" r="3.2" fill="#fff" stroke="#501ee8" stroke-width="1.8"/>
<circle cx="632.0" cy="505.3" r="3.2" fill="#fff" stroke="#501ee8" stroke-width="1.8"/>
<circle cx="675.5" cy="499.8" r="3.2" fill="#fff" stroke="#501ee8" stroke-width="1.8"/>
<circle cx="693.0" cy="493.9" r="3.2" fill="#fff" stroke="#501ee8" stroke-width="1.8"/>
<circle cx="721.4" cy="487.6" r="3.2" fill="#fff" stroke="#501ee8" stroke-width="1.8"/>
<circle cx="791.9" cy="482.8" r="3.2" fill="#fff" stroke="#501ee8" stroke-width="1.8"/>
<circle cx="800.6" cy="477.5" r="3.2" fill="#fff" stroke="#501ee8" stroke-width="1.8"/>
<circle cx="802.0" cy="468.6" r="3.2" fill="#fff" stroke="#501ee8" stroke-width="1.8"/>
<circle cx="845.4" cy="463.9" r="3.2" fill="#fff" stroke="#501ee8" stroke-width="1.8"/>
<circle cx="988.3" cy="459.7" r="3.2" fill="#fff" stroke="#501ee8" stroke-width="1.8"/>
<circle cx="993.0" cy="454.2" r="3.2" fill="#fff" stroke="#501ee8" stroke-width="1.8"/>
<circle cx="1004.3" cy="448.6" r="3.2" fill="#fff" stroke="#501ee8" stroke-width="1.8"/>
<circle cx="1030.7" cy="442.9" r="3.2" fill="#fff" stroke="#501ee8" stroke-width="1.8"/>
<circle cx="1106.0" cy="438.2" r="3.2" fill="#fff" stroke="#501ee8" stroke-width="1.8"/>
<circle cx="1115.8" cy="433.5" r="3.2" fill="#fff" stroke="#501ee8" stroke-width="1.8"/>
<circle cx="1292.5" cy="428.0" r="3.2" fill="#fff" stroke="#501ee8" stroke-width="1.8"/>
<circle cx="1729.5" cy="421.6" r="3.2" fill="#fff" stroke="#501ee8" stroke-width="1.8"/>
<circle cx="1825.7" cy="415.8" r="3.2" fill="#fff" stroke="#501ee8" stroke-width="1.8"/>
<circle cx="1840.8" cy="410.3" r="3.2" fill="#fff" stroke="#501ee8" stroke-width="1.8"/>
<circle cx="329.5" cy="606.1" r="3.2" fill="#fff" stroke="#e000f0" stroke-width="1.8"/>
<circle cx="341.0" cy="606.1" r="3.2" fill="#fff" stroke="#e000f0" stroke-width="1.8"/>
<circle cx="360.0" cy="602.4" r="3.2" fill="#fff" stroke="#e000f0" stroke-width="1.8"/>
<circle cx="389.8" cy="588.2" r="3.2" fill="#fff" stroke="#e000f0" stroke-width="1.8"/>
<circle cx="419.6" cy="585.6" r="3.2" fill="#fff" stroke="#e000f0" stroke-width="1.8"/>
<circle cx="439.3" cy="580.0" r="3.2" fill="#fff" stroke="#e000f0" stroke-width="1.8"/>
<circle cx="448.7" cy="577.8" r="3.2" fill="#fff" stroke="#e000f0" stroke-width="1.8"/>
<circle cx="454.2" cy="576.3" r="3.2" fill="#fff" stroke="#e000f0" stroke-width="1.8"/>
<circle cx="456.1" cy="570.7" r="3.2" fill="#fff" stroke="#e000f0" stroke-width="1.8"/>
<circle cx="459.5" cy="565.1" r="3.2" fill="#fff" stroke="#e000f0" stroke-width="1.8"/>
<circle cx="484.1" cy="559.4" r="3.2" fill="#fff" stroke="#e000f0" stroke-width="1.8"/>
<circle cx="487.2" cy="557.6" r="3.2" fill="#fff" stroke="#e000f0" stroke-width="1.8"/>
<circle cx="496.5" cy="553.2" r="3.2" fill="#fff" stroke="#e000f0" stroke-width="1.8"/>
<circle cx="514.7" cy="547.5" r="3.2" fill="#fff" stroke="#e000f0" stroke-width="1.8"/>
<circle cx="530.6" cy="542.2" r="3.2" fill="#fff" stroke="#e000f0" stroke-width="1.8"/>
<circle cx="550.9" cy="540.8" r="3.2" fill="#fff" stroke="#e000f0" stroke-width="1.8"/>
<circle cx="552.2" cy="536.0" r="3.2" fill="#fff" stroke="#e000f0" stroke-width="1.8"/>
<circle cx="555.3" cy="533.8" r="3.2" fill="#fff" stroke="#e000f0" stroke-width="1.8"/>
<circle cx="567.3" cy="528.9" r="3.2" fill="#fff" stroke="#e000f0" stroke-width="1.8"/>
<circle cx="577.9" cy="527.6" r="3.2" fill="#fff" stroke="#e000f0" stroke-width="1.8"/>
<circle cx="579.6" cy="520.9" r="3.2" fill="#fff" stroke="#e000f0" stroke-width="1.8"/>
<circle cx="610.3" cy="514.8" r="3.2" fill="#fff" stroke="#e000f0" stroke-width="1.8"/>
<circle cx="630.4" cy="509.3" r="3.2" fill="#fff" stroke="#e000f0" stroke-width="1.8"/>
<circle cx="638.3" cy="503.7" r="3.2" fill="#fff" stroke="#e000f0" stroke-width="1.8"/>
<circle cx="647.1" cy="499.0" r="3.2" fill="#fff" stroke="#e000f0" stroke-width="1.8"/>
<circle cx="651.0" cy="492.3" r="3.2" fill="#fff" stroke="#e000f0" stroke-width="1.8"/>
<circle cx="658.9" cy="486.6" r="3.2" fill="#fff" stroke="#e000f0" stroke-width="1.8"/>
<circle cx="666.4" cy="480.8" r="3.2" fill="#fff" stroke="#e000f0" stroke-width="1.8"/>
<circle cx="678.7" cy="475.2" r="3.2" fill="#fff" stroke="#e000f0" stroke-width="1.8"/>
<circle cx="681.5" cy="468.6" r="3.2" fill="#fff" stroke="#e000f0" stroke-width="1.8"/>
<circle cx="705.0" cy="463.9" r="3.2" fill="#fff" stroke="#e000f0" stroke-width="1.8"/>
<circle cx="736.1" cy="461.0" r="3.2" fill="#fff" stroke="#e000f0" stroke-width="1.8"/>
<circle cx="782.3" cy="457.3" r="3.2" fill="#fff" stroke="#e000f0" stroke-width="1.8"/>
<circle cx="917.1" cy="451.2" r="3.2" fill="#fff" stroke="#e000f0" stroke-width="1.8"/>
<circle cx="932.4" cy="445.2" r="3.2" fill="#fff" stroke="#e000f0" stroke-width="1.8"/>
<circle cx="969.5" cy="439.9" r="3.2" fill="#fff" stroke="#e000f0" stroke-width="1.8"/>
<circle cx="991.5" cy="434.3" r="3.2" fill="#fff" stroke="#e000f0" stroke-width="1.8"/>
<circle cx="1027.9" cy="429.2" r="3.2" fill="#fff" stroke="#e000f0" stroke-width="1.8"/>
<circle cx="1053.3" cy="423.0" r="3.2" fill="#fff" stroke="#e000f0" stroke-width="1.8"/>
<circle cx="1110.4" cy="416.9" r="3.2" fill="#fff" stroke="#e000f0" stroke-width="1.8"/>
<circle cx="1640.2" cy="411.6" r="3.2" fill="#fff" stroke="#e000f0" stroke-width="1.8"/>
<circle cx="336.2" cy="606.1" r="3.2" fill="#fff" stroke="#78d714" stroke-width="1.8"/>
<circle cx="347.3" cy="603.9" r="3.2" fill="#fff" stroke="#78d714" stroke-width="1.8"/>
<circle cx="371.6" cy="602.4" r="3.2" fill="#fff" stroke="#78d714" stroke-width="1.8"/>
<circle cx="378.6" cy="600.1" r="3.2" fill="#fff" stroke="#78d714" stroke-width="1.8"/>
<circle cx="393.5" cy="599.0" r="3.2" fill="#fff" stroke="#78d714" stroke-width="1.8"/>
<circle cx="394.3" cy="592.7" r="3.2" fill="#fff" stroke="#78d714" stroke-width="1.8"/>
<circle cx="402.5" cy="591.2" r="3.2" fill="#fff" stroke="#78d714" stroke-width="1.8"/>
<circle cx="411.0" cy="585.6" r="3.2" fill="#fff" stroke="#78d714" stroke-width="1.8"/>
<circle cx="426.3" cy="577.4" r="3.2" fill="#fff" stroke="#78d714" stroke-width="1.8"/>
<circle cx="531.5" cy="574.4" r="3.2" fill="#fff" stroke="#78d714" stroke-width="1.8"/>
<circle cx="542.9" cy="572.2" r="3.2" fill="#fff" stroke="#78d714" stroke-width="1.8"/>
<circle cx="594.7" cy="566.9" r="3.2" fill="#fff" stroke="#78d714" stroke-width="1.8"/>
<circle cx="662.1" cy="561.2" r="3.2" fill="#fff" stroke="#78d714" stroke-width="1.8"/>
<circle cx="720.7" cy="557.2" r="3.2" fill="#fff" stroke="#78d714" stroke-width="1.8"/>
<circle cx="723.8" cy="552.5" r="3.2" fill="#fff" stroke="#78d714" stroke-width="1.8"/>
<circle cx="744.4" cy="548.5" r="3.2" fill="#fff" stroke="#78d714" stroke-width="1.8"/>
<circle cx="754.7" cy="546.5" r="3.2" fill="#fff" stroke="#78d714" stroke-width="1.8"/>
<circle cx="764.2" cy="543.6" r="3.2" fill="#fff" stroke="#78d714" stroke-width="1.8"/>
<circle cx="780.0" cy="537.9" r="3.2" fill="#fff" stroke="#78d714" stroke-width="1.8"/>
<circle cx="791.9" cy="532.5" r="3.2" fill="#fff" stroke="#78d714" stroke-width="1.8"/>
<circle cx="846.5" cy="527.2" r="3.2" fill="#fff" stroke="#78d714" stroke-width="1.8"/>
<circle cx="854.4" cy="525.1" r="3.2" fill="#fff" stroke="#78d714" stroke-width="1.8"/>
<circle cx="862.6" cy="520.7" r="3.2" fill="#fff" stroke="#78d714" stroke-width="1.8"/>
<circle cx="895.5" cy="514.5" r="3.2" fill="#fff" stroke="#78d714" stroke-width="1.8"/>
<circle cx="1412.7" cy="510.0" r="3.2" fill="#fff" stroke="#78d714" stroke-width="1.8"/>
<circle cx="1422.5" cy="504.2" r="3.2" fill="#fff" stroke="#78d714" stroke-width="1.8"/>
<circle cx="1431.3" cy="502.2" r="3.2" fill="#fff" stroke="#78d714" stroke-width="1.8"/>
<circle cx="1434.2" cy="500.3" r="3.2" fill="#fff" stroke="#78d714" stroke-width="1.8"/>
<circle cx="1441.1" cy="494.4" r="3.2" fill="#fff" stroke="#78d714" stroke-width="1.8"/>
<circle cx="1450.5" cy="488.9" r="3.2" fill="#fff" stroke="#78d714" stroke-width="1.8"/>
<circle cx="1542.3" cy="477.3" r="3.2" fill="#fff" stroke="#78d714" stroke-width="1.8"/>
<circle cx="1562.0" cy="472.6" r="3.2" fill="#fff" stroke="#78d714" stroke-width="1.8"/>
<circle cx="1578.7" cy="467.3" r="3.2" fill="#fff" stroke="#78d714" stroke-width="1.8"/>
<circle cx="1582.2" cy="461.9" r="3.2" fill="#fff" stroke="#78d714" stroke-width="1.8"/>
<circle cx="1594.2" cy="456.8" r="3.2" fill="#fff" stroke="#78d714" stroke-width="1.8"/>
<circle cx="1629.0" cy="451.0" r="3.2" fill="#fff" stroke="#78d714" stroke-width="1.8"/>
<circle cx="1678.4" cy="445.2" r="3.2" fill="#fff" stroke="#78d714" stroke-width="1.8"/>
<circle cx="1693.5" cy="439.5" r="3.2" fill="#fff" stroke="#78d714" stroke-width="1.8"/>
<circle cx="1787.0" cy="433.7" r="3.2" fill="#fff" stroke="#78d714" stroke-width="1.8"/>
<circle cx="1804.1" cy="429.0" r="3.2" fill="#fff" stroke="#78d714" stroke-width="1.8"/>
<circle cx="1826.2" cy="423.2" r="3.2" fill="#fff" stroke="#78d714" stroke-width="1.8"/>
<circle cx="1834.3" cy="420.2" r="3.2" fill="#fff" stroke="#78d714" stroke-width="1.8"/>
<circle cx="329.5" cy="606.1" r="3.2" fill="#fff" stroke="#a514dc" stroke-width="1.8"/>
<circle cx="354.8" cy="600.1" r="3.2" fill="#fff" stroke="#a514dc" stroke-width="1.8"/>
<circle cx="364.5" cy="598.3" r="3.2" fill="#fff" stroke="#a514dc" stroke-width="1.8"/>
<circle cx="369.7" cy="592.7" r="3.2" fill="#fff" stroke="#a514dc" stroke-width="1.8"/>
<circle cx="375.7" cy="590.8" r="3.2" fill="#fff" stroke="#a514dc" stroke-width="1.8"/>
<circle cx="381.6" cy="586.7" r="3.2" fill="#fff" stroke="#a514dc" stroke-width="1.8"/>
<circle cx="386.1" cy="580.4" r="3.2" fill="#fff" stroke="#a514dc" stroke-width="1.8"/>
<circle cx="399.1" cy="578.5" r="3.2" fill="#fff" stroke="#a514dc" stroke-width="1.8"/>
<circle cx="406.6" cy="576.7" r="3.2" fill="#fff" stroke="#a514dc" stroke-width="1.8"/>
<circle cx="415.5" cy="570.3" r="3.2" fill="#fff" stroke="#a514dc" stroke-width="1.8"/>
<circle cx="424.4" cy="565.9" r="3.2" fill="#fff" stroke="#a514dc" stroke-width="1.8"/>
<circle cx="431.9" cy="564.0" r="3.2" fill="#fff" stroke="#a514dc" stroke-width="1.8"/>
<circle cx="470.0" cy="563.0" r="3.2" fill="#fff" stroke="#a514dc" stroke-width="1.8"/>
<circle cx="539.0" cy="555.9" r="3.2" fill="#fff" stroke="#a514dc" stroke-width="1.8"/>
<circle cx="574.3" cy="550.1" r="3.2" fill="#fff" stroke="#a514dc" stroke-width="1.8"/>
<circle cx="600.0" cy="548.4" r="3.2" fill="#fff" stroke="#a514dc" stroke-width="1.8"/>
<circle cx="652.9" cy="544.6" r="3.2" fill="#fff" stroke="#a514dc" stroke-width="1.8"/>
<circle cx="670.8" cy="539.0" r="3.2" fill="#fff" stroke="#a514dc" stroke-width="1.8"/>
<circle cx="706.7" cy="533.8" r="3.2" fill="#fff" stroke="#a514dc" stroke-width="1.8"/>
<circle cx="719.5" cy="527.8" r="3.2" fill="#fff" stroke="#a514dc" stroke-width="1.8"/>
<circle cx="747.2" cy="523.2" r="3.2" fill="#fff" stroke="#a514dc" stroke-width="1.8"/>
<circle cx="760.7" cy="518.0" r="3.2" fill="#fff" stroke="#a514dc" stroke-width="1.8"/>
<circle cx="761.8" cy="512.4" r="3.2" fill="#fff" stroke="#a514dc" stroke-width="1.8"/>
<circle cx="763.4" cy="506.6" r="3.2" fill="#fff" stroke="#a514dc" stroke-width="1.8"/>
<circle cx="846.8" cy="501.4" r="3.2" fill="#fff" stroke="#a514dc" stroke-width="1.8"/>
<circle cx="859.1" cy="495.5" r="3.2" fill="#fff" stroke="#a514dc" stroke-width="1.8"/>
<circle cx="863.6" cy="489.2" r="3.2" fill="#fff" stroke="#a514dc" stroke-width="1.8"/>
<circle cx="963.8" cy="484.7" r="3.2" fill="#fff" stroke="#a514dc" stroke-width="1.8"/>
<circle cx="976.6" cy="480.0" r="3.2" fill="#fff" stroke="#a514dc" stroke-width="1.8"/>
<circle cx="1032.2" cy="476.3" r="3.2" fill="#fff" stroke="#a514dc" stroke-width="1.8"/>
<circle cx="1054.6" cy="471.9" r="3.2" fill="#fff" stroke="#a514dc" stroke-width="1.8"/>
<circle cx="1063.6" cy="466.8" r="3.2" fill="#fff" stroke="#a514dc" stroke-width="1.8"/>
<circle cx="1099.1" cy="461.6" r="3.2" fill="#fff" stroke="#a514dc" stroke-width="1.8"/>
<circle cx="1117.0" cy="455.5" r="3.2" fill="#fff" stroke="#a514dc" stroke-width="1.8"/>
<circle cx="1143.7" cy="449.9" r="3.2" fill="#fff" stroke="#a514dc" stroke-width="1.8"/>
<text transform="translate(303.69,612.70) scale(0.9947,1)" font-size="22.06" fill="#333">0</text>
<text transform="translate(261.00,549.80) scale(0.9947,1)" font-size="22.06" fill="#333">1,000</text>
<text transform="translate(261.00,488.50) scale(0.9947,1)" font-size="22.06" fill="#333">2,000</text>
<text transform="translate(261.00,425.50) scale(0.9947,1)" font-size="22.06" fill="#333">3,000</text>
<text transform="translate(261.00,364.20) scale(0.9947,1)" font-size="22.06" fill="#333">4,000</text>
<text transform="translate(261.00,302.90) scale(0.9947,1)" font-size="22.06" fill="#333">5,000</text>
<text transform="translate(261.00,240.00) scale(0.9947,1)" font-size="22.06" fill="#333">6,000</text>
<text transform="translate(261.00,178.90) scale(0.9947,1)" font-size="22.06" fill="#333">7,000</text>
<text transform="translate(304.75,637.80) scale(0.9153,1)" font-size="22.21" fill="#333">08:21</text>
<text transform="translate(304.14,658.70) scale(0.9153,1)" font-size="22.21" fill="#333">03-05</text>
<line x1="519.13" y1="608.5" x2="519.13" y2="617.0" stroke="#333" stroke-width="1.9"/>
<text transform="translate(492.82,637.80) scale(0.9153,1)" font-size="22.21" fill="#333">12:00</text>
<text transform="translate(492.67,658.70) scale(0.9153,1)" font-size="22.21" fill="#333">03-05</text>
<line x1="829.05" y1="608.5" x2="829.05" y2="617.0" stroke="#333" stroke-width="1.9"/>
<text transform="translate(802.74,637.80) scale(0.9153,1)" font-size="22.21" fill="#333">18:00</text>
<text transform="translate(802.58,658.70) scale(0.9153,1)" font-size="22.21" fill="#333">03-05</text>
<line x1="1138.97" y1="608.5" x2="1138.97" y2="617.0" stroke="#333" stroke-width="1.9"/>
<text transform="translate(1113.01,637.80) scale(0.9153,1)" font-size="22.21" fill="#333">00:00</text>
<text transform="translate(1112.50,658.70) scale(0.9153,1)" font-size="22.21" fill="#333">03-06</text>
<line x1="1448.88" y1="608.5" x2="1448.88" y2="617.0" stroke="#333" stroke-width="1.9"/>
<text transform="translate(1422.93,637.80) scale(0.9153,1)" font-size="22.21" fill="#333">06:00</text>
<text transform="translate(1422.42,658.70) scale(0.9153,1)" font-size="22.21" fill="#333">03-06</text>
<line x1="1758.80" y1="608.5" x2="1758.80" y2="617.0" stroke="#333" stroke-width="1.9"/>
<text transform="translate(1732.49,637.80) scale(0.9153,1)" font-size="22.21" fill="#333">12:00</text>
<text transform="translate(1732.33,658.70) scale(0.9153,1)" font-size="22.21" fill="#333">03-06</text>
<line x1="1857.80" y1="608.5" x2="1857.80" y2="617.0" stroke="#333" stroke-width="1.9"/>
<text transform="translate(1831.54,637.80) scale(0.9153,1)" font-size="22.21" fill="#333">13:55</text>
<text transform="translate(1831.34,658.70) scale(0.9153,1)" font-size="22.21" fill="#333">03-06</text>
<line x1="71.5" y1="686" x2="115.5" y2="686" stroke="#d46914" stroke-width="1.9"/>
<circle cx="93.5" cy="686" r="9.3" fill="#fff" stroke="#d46914" stroke-width="1.9"/>
<text transform="translate(124.12,690.80) scale(1.0738,1)" font-size="21.24" font-weight="normal" fill="#333">pls i want an apple pencil</text>
<line x1="397" y1="686" x2="441" y2="686" stroke="#1e23f0" stroke-width="1.9"/>
<circle cx="419" cy="686" r="9.3" fill="#fff" stroke="#1e23f0" stroke-width="1.9"/>
<text transform="translate(450.40,690.80) scale(1.0934,1)" font-size="21.24" font-weight="normal" fill="#333">w4t3rl0wn</text>
<line x1="572.4" y1="686" x2="616.4" y2="686" stroke="#fa192d" stroke-width="1.9"/>
<circle cx="594.4" cy="686" r="9.3" fill="#fff" stroke="#fa192d" stroke-width="1.9"/>
<text transform="translate(625.29,690.80) scale(1.0045,1)" font-size="21.24" font-weight="normal" fill="#333">PencilTesters</text>
<line x1="770.6" y1="686" x2="814.6" y2="686" stroke="#b97d0f" stroke-width="1.9"/>
<circle cx="792.6" cy="686" r="9.3" fill="#fff" stroke="#b97d0f" stroke-width="1.9"/>
<text transform="translate(824.20,690.80) scale(0.9948,1)" font-size="21.24" font-weight="normal" fill="#333">ALUMINUM INGOTS........</text>
<line x1="1088.2" y1="686" x2="1132.2" y2="686" stroke="#780ab4" stroke-width="1.9"/>
<circle cx="1110.2" cy="686" r="9.3" fill="#fff" stroke="#780ab4" stroke-width="1.9"/>
<text transform="translate(1140.98,690.80) scale(1.0641,1)" font-size="21.24" font-weight="normal" fill="#333">Shadowbyte</text>
<line x1="1283.3" y1="686" x2="1327.3" y2="686" stroke="#dc197d" stroke-width="1.9"/>
<circle cx="1305.3" cy="686" r="9.3" fill="#fff" stroke="#dc197d" stroke-width="1.9"/>
<text transform="translate(1336.59,690.80) scale(0.9683,1)" font-size="21.24" font-weight="normal" fill="#333">The KAST</text>
<line x1="1449.7" y1="686" x2="1493.7" y2="686" stroke="#501ee8" stroke-width="1.9"/>
<circle cx="1471.7" cy="686" r="9.3" fill="#fff" stroke="#501ee8" stroke-width="1.9"/>
<text transform="translate(1502.88,690.80) scale(0.9806,1)" font-size="21.24" font-weight="normal" fill="#333">TEAM CAPPUCCINO</text>
<line x1="1723.8" y1="686" x2="1767.8" y2="686" stroke="#e000f0" stroke-width="1.9"/>
<circle cx="1745.8" cy="686" r="9.3" fill="#fff" stroke="#e000f0" stroke-width="1.9"/>
<text transform="translate(1775.95,690.80) scale(1.0478,1)" font-size="21.24" font-weight="normal" fill="#333">kenula</text>
<line x1="1860.6" y1="686" x2="1904.6" y2="686" stroke="#78d714" stroke-width="1.9"/>
<circle cx="1882.6" cy="686" r="9.3" fill="#fff" stroke="#78d714" stroke-width="1.9"/>
<clipPath id="clp"><rect x="1900" y="660" width="45.5" height="50"/></clipPath>
<g clip-path="url(#clp)"><text transform="translate(1913.56,690.80) scale(1.0241,1)" font-size="21.24" font-weight="normal" fill="#333">The</text></g>
<path d="M1962.4,686 L1977.9,673.3 L1977.9,698.7 Z" fill="#aaaaaa"/>
<path d="M2048.2,686 L2032,673.3 L2032,698.7 Z" fill="#2f4554"/>
<text transform="translate(1988.48,690.80) scale(1.1425,1)" font-size="21.24" font-weight="normal" fill="#333">1/2</text>
<text transform="translate(108.98,822.10) scale(0.8667,1)" font-size="30.52" font-weight="bold" fill="#ffffff">Place</text>
<text transform="translate(218.93,822.10) scale(0.8767,1)" font-size="30.52" font-weight="bold" fill="#ffffff">Team</text>
<text transform="translate(1736.23,821.70) scale(0.8447,1)" font-size="30.52" font-weight="bold" fill="#ffffff">Score</text>
<rect x="88" y="855.0" width="1942" height="84.0" fill="#32363e"/>
<rect x="88" y="1027.0" width="1942" height="83.5" fill="#32363e"/>
<rect x="88" y="1198.0" width="1942" height="84.0" fill="#32363e"/>
<rect x="88" y="1370.0" width="1942" height="10.0" fill="#32363e"/>
<rect x="88" y="853.0" width="1942" height="2" fill="#474d57"/>
<rect x="88" y="939.0" width="1942" height="2" fill="#474d57"/>
<rect x="88" y="1025.0" width="1942" height="2" fill="#474d57"/>
<rect x="88" y="1110.5" width="1942" height="2" fill="#474d57"/>
<rect x="88" y="1196.0" width="1942" height="2" fill="#474d57"/>
<rect x="88" y="1282.0" width="1942" height="2" fill="#474d57"/>
<rect x="88" y="1368.0" width="1942" height="2" fill="#474d57"/>
<text transform="translate(135.90,908.10) scale(0.9183,1)" font-size="30.81" font-weight="bold" fill="#ffffff">1</text>
<text transform="translate(218.45,908.10) scale(0.9399,1)" font-size="28.69" font-weight="normal" fill="#3a80c8">pls i want an apple pencil</text>
<text transform="translate(1735.80,908.10) scale(1.0183,1)" font-size="29.37" font-weight="normal" fill="#ffffff">6739</text>
<text transform="translate(134.44,994.00) scale(1.0750,1)" font-size="30.81" font-weight="bold" fill="#ffffff">2</text>
<text transform="translate(220.20,994.00) scale(1.0571,1)" font-size="28.69" font-weight="normal" fill="#3a80c8">w4t3rl0wn</text>
<text transform="translate(1736.11,994.00) scale(1.0135,1)" font-size="29.37" font-weight="normal" fill="#ffffff">5739</text>
<text transform="translate(135.22,1079.90) scale(1.0162,1)" font-size="30.81" font-weight="bold" fill="#ffffff">3</text>
<text transform="translate(217.98,1079.90) scale(0.9656,1)" font-size="28.69" font-weight="normal" fill="#3a80c8">PencilTesters</text>
<text transform="translate(1736.11,1079.90) scale(1.0159,1)" font-size="29.37" font-weight="normal" fill="#ffffff">5157</text>
<text transform="translate(134.65,1164.70) scale(0.9827,1)" font-size="30.81" font-weight="bold" fill="#ffffff">4</text>
<text transform="translate(220.20,1164.70) scale(0.9299,1)" font-size="28.69" font-weight="normal" fill="#3a80c8">ALUMINUM INGOTS........</text>
<text transform="translate(1736.71,1164.70) scale(1.0065,1)" font-size="29.37" font-weight="normal" fill="#ffffff">4847</text>
<text transform="translate(135.36,1250.70) scale(0.9087,1)" font-size="30.81" font-weight="bold" fill="#ffffff">5</text>
<text transform="translate(218.95,1250.70) scale(0.9694,1)" font-size="28.69" font-weight="normal" fill="#3a80c8">Shadowbyte</text>
<text transform="translate(1736.71,1250.70) scale(1.0041,1)" font-size="29.37" font-weight="normal" fill="#ffffff">4201</text>
<text transform="translate(134.38,1337.20) scale(1.0372,1)" font-size="30.81" font-weight="bold" fill="#ffffff">6</text>
<text transform="translate(219.67,1337.20) scale(0.9175,1)" font-size="28.69" font-weight="normal" fill="#3a80c8">The KAST</text>
<text transform="translate(1736.71,1337.20) scale(1.0065,1)" font-size="29.37" font-weight="normal" fill="#ffffff">4007</text>
<rect x="0" y="0" width="2118" height="140" fill="#353941"/>
<text transform="translate(173.43,59.80) scale(0.9717,1)" font-size="30.52" font-weight="normal" fill="#9c9fa3">Information</text>
<text transform="translate(347.81,59.80) scale(0.9084,1)" font-size="30.52" font-weight="normal" fill="#9c9fa3">CoC</text>
<text transform="translate(429.33,59.80) scale(0.9244,1)" font-size="30.52" font-weight="normal" fill="#9c9fa3">Survival</text>
<text transform="translate(429.41,101.70) scale(1.0587,1)" font-size="30.52" font-weight="normal" fill="#9c9fa3">Kit</text>
<text transform="translate(575.66,59.80) scale(0.9426,1)" font-size="30.52" font-weight="normal" fill="#9c9fa3">Workshop</text>
<text transform="translate(574.99,101.70) scale(0.8817,1)" font-size="30.52" font-weight="normal" fill="#9c9fa3">Schedule</text>
<text transform="translate(809.03,59.80) scale(0.9055,1)" font-size="30.52" font-weight="normal" fill="#9c9fa3">Users</text>
<text transform="translate(908.07,59.80) scale(0.8661,1)" font-size="30.52" font-weight="normal" fill="#9c9fa3">Teams</text>
<text transform="translate(1013.45,59.80) scale(0.9103,1)" font-size="30.52" font-weight="normal" fill="#9c9fa3">Scoreboard</text>
<text transform="translate(1183.05,59.80) scale(0.8870,1)" font-size="30.52" font-weight="normal" fill="#9c9fa3">Challenges</text>
<text transform="translate(1345.85,101.80) scale(0.9613,1)" font-size="30.52" font-weight="normal" fill="#9c9fa3">Notifications</text>
<text transform="translate(1557.46,101.80) scale(0.8912,1)" font-size="30.52" font-weight="normal" fill="#9c9fa3">Team</text>
<text transform="translate(1685.26,101.80) scale(0.9587,1)" font-size="30.52" font-weight="normal" fill="#9c9fa3">Profile</text>
<text transform="translate(1820.75,101.80) scale(0.9129,1)" font-size="30.52" font-weight="normal" fill="#9c9fa3">Settings</text>
<g transform="translate(1346,35)" fill="#a0a3a7"><circle cx="12.7" cy="2.2" r="2.2"/><path d="M12.7,3.0 C6.2,3.0 3.8,7.8 3.8,12.8 L3.8,17.6 C3.8,19.6 2.2,21.2 0.4,22.8 C0.1,23.1 0,23.5 0,23.9 L0,24.4 L25.4,24.4 L25.4,23.9 C25.4,23.5 25.3,23.1 25,22.8 C23.2,21.2 21.6,19.6 21.6,17.6 L21.6,12.8 C21.6,7.8 19.2,3.0 12.7,3.0 Z"/><path d="M9.2,25.4 L16.2,25.4 A3.5,3.5 0 0 1 9.2,25.4 Z"/></g>
<g transform="translate(1557,37)" fill="#a0a3a7"><circle cx="18" cy="6.6" r="6.6"/><circle cx="5.6" cy="7" r="3.9"/><circle cx="30.4" cy="7" r="3.9"/><path d="M7.6,25 L7.6,21 C7.6,16.5 11,13.6 14.5,13.6 L21.5,13.6 C25,13.6 28.4,16.5 28.4,21 L28.4,25 Z"/><path d="M0,19.5 C0,15 2,12.5 5,12.5 L8.5,12.5 C9.5,12.5 10.3,12.9 11,13.4 C8,15 6.2,17.6 6,21.5 L1.6,21.5 C0.7,21.5 0,20.8 0,19.5 Z"/><path d="M36,19.5 C36,15 34,12.5 31,12.5 L27.5,12.5 C26.5,12.5 25.7,12.9 25,13.4 C28,15 29.8,17.6 30,21.5 L34.4,21.5 C35.3,21.5 36,20.8 36,19.5 Z"/></g>
<g transform="translate(1685,35.5)"><circle cx="14.1" cy="13.9" r="13.9" fill="#a0a3a7"/><circle cx="14" cy="10.3" r="4.8" fill="#353941"/><path d="M6.2,20.6 C7.4,18.4 10,17.6 14,17.6 C18,17.6 20.6,18.4 21.8,20.6 C20,23.2 17.2,24.3 14,24.3 C10.8,24.3 8,23.2 6.2,20.6 Z" fill="#353941"/></g>
<g><polygon points="1830.45,40.38 1830.99,37.38 1835.21,37.38 1835.75,40.38 1837.68,41.18 1840.17,39.44 1843.16,42.43 1841.42,44.92 1842.22,46.85 1845.22,47.39 1845.22,51.61 1842.22,52.15 1841.42,54.08 1843.16,56.57 1840.17,59.56 1837.68,57.82 1835.75,58.62 1835.21,61.62 1830.99,61.62 1830.45,58.62 1828.52,57.82 1826.03,59.56 1823.04,56.57 1824.78,54.08 1823.98,52.15 1820.98,51.61 1820.98,47.39 1823.98,46.85 1824.78,44.92 1823.04,42.43 1826.03,39.44 1828.52,41.18" fill="#a0a3a7" stroke="#a0a3a7" stroke-width="0.8" stroke-linejoin="round"/><circle cx="1833.1" cy="49.5" r="3.8" fill="#353941"/><polygon points="1851.13,36.04 1851.99,34.78 1853.84,35.54 1853.56,37.05 1854.45,37.94 1855.96,37.66 1856.72,39.51 1855.46,40.37 1855.46,41.63 1856.72,42.49 1855.96,44.34 1854.45,44.06 1853.56,44.95 1853.84,46.46 1851.99,47.22 1851.13,45.96 1849.87,45.96 1849.01,47.22 1847.16,46.46 1847.44,44.95 1846.55,44.06 1845.04,44.34 1844.28,42.49 1845.54,41.63 1845.54,40.37 1844.28,39.51 1845.04,37.66 1846.55,37.94 1847.44,37.05 1847.16,35.54 1849.01,34.78 1849.87,36.04" fill="#a0a3a7" stroke="#a0a3a7" stroke-width="0.8" stroke-linejoin="round"/><circle cx="1850.5" cy="41.0" r="1.7" fill="#353941"/><polygon points="1851.13,52.64 1851.99,51.38 1853.84,52.14 1853.56,53.65 1854.45,54.54 1855.96,54.26 1856.72,56.11 1855.46,56.97 1855.46,58.23 1856.72,59.09 1855.96,60.94 1854.45,60.66 1853.56,61.55 1853.84,63.06 1851.99,63.82 1851.13,62.56 1849.87,62.56 1849.01,63.82 1847.16,63.06 1847.44,61.55 1846.55,60.66 1845.04,60.94 1844.28,59.09 1845.54,58.23 1845.54,56.97 1844.28,56.11 1845.04,54.26 1846.55,54.54 1847.44,53.65 1847.16,52.14 1849.01,51.38 1849.87,52.64" fill="#a0a3a7" stroke="#a0a3a7" stroke-width="0.8" stroke-linejoin="round"/><circle cx="1850.5" cy="57.6" r="1.7" fill="#353941"/></g>
<g transform="translate(1981,38.7)" fill="#a0a3a7"><path d="M4.2,0.2 L11.7,0.2 L11.7,4.1 L5.8,4.1 C5.2,4.1 4.8,4.5 4.8,5.1 L4.8,16.3 C4.8,16.9 5.2,17.3 5.8,17.3 L11.7,17.3 L11.7,21.1 L4.2,21.1 C1.9,21.1 0.2,19.3 0.2,17.1 L0.2,4.2 C0.2,2 1.9,0.2 4.2,0.2 Z"/><path d="M8.6,6.6 L16.2,6.6 L16.2,0.3 C16.2,0.1 16.5,0 16.7,0.2 L29,10.65 L16.7,21.1 C16.5,21.3 16.2,21.2 16.2,21 L16.2,15 L8.6,15 C8.1,15 7.8,14.6 7.8,14.2 L7.8,7.4 C7.8,7 8.1,6.6 8.6,6.6 Z"/></g>
<defs><linearGradient id="gl" x1="0" y1="0" x2="0" y2="1"><stop offset="0" stop-color="#ff3a00"/><stop offset="0.6" stop-color="#ff5a1a"/><stop offset="1" stop-color="#ff7a40"/></linearGradient><linearGradient id="gs" x1="0" y1="0" x2="0" y2="1"><stop offset="0" stop-color="#5ee3f8"/><stop offset="1" stop-color="#4fd0f2"/></linearGradient></defs>
<path d="M109.8,55.3 Q117,60.8 128.9,62.4 L128.9,66.5 Q128,83 110,95.6 Q92,83 91.1,66.5 L91.1,62.4 Q102.6,60.8 109.8,55.3 Z" fill="#f4f7fa"/>
<path d="M109.8,56.8 Q116.5,61.8 127.6,63.4 L127.6,66.5 Q126.8,82 110,94.1 Q93.2,82 92.4,66.5 L92.4,63.4 Q103.1,61.8 109.8,56.8 Z" fill="url(#gs)"/>
<path d="M101.5,84 L118.5,84 Q117,90 110,94 Q103,90 101.5,84 Z" fill="#5aa6e6"/>
<path d="M104,86 l1,2 M108,85.5 l1,2.5 M112,86 l1,2 M106,89 l1,2 M110,89 l1,2 M114,88.5 l0.8,1.8" stroke="#f0d060" stroke-width="0.9"/>
<circle cx="94.8" cy="73" r="4.7" fill="#d0620e"/><circle cx="125.2" cy="73" r="4.7" fill="#d0620e"/>
<ellipse cx="95.2" cy="74" rx="3.2" ry="3.8" fill="#f8b27e"/><ellipse cx="124.8" cy="74" rx="3.2" ry="3.8" fill="#f8b27e"/>
<ellipse cx="110" cy="73.5" rx="13.2" ry="11.2" fill="#d2640c"/>
<ellipse cx="110" cy="78.5" rx="11.2" ry="6.3" fill="#f6b27c"/>
<ellipse cx="105.2" cy="70.3" rx="5" ry="3.2" fill="#f9a885"/><ellipse cx="114.8" cy="70.3" rx="5" ry="3.2" fill="#f9a885"/>
<ellipse cx="103.4" cy="75.3" rx="4.6" ry="3.3" fill="url(#gl)"/><ellipse cx="116.6" cy="75.3" rx="4.6" ry="3.3" fill="url(#gl)"/>
<path d="M107.5,74.5 Q110,73.5 112.5,74.5" stroke="#f6b27c" stroke-width="0.8" fill="none"/>
<ellipse cx="107" cy="81.3" rx="1" ry="0.6" fill="#b0704a"/>
<rect x="2118" y="0" width="30" height="1380" fill="#f1f1f1"/>
<rect x="2118" y="0" width="1" height="1380" fill="#fbfbfb"/>
<rect x="2147" y="0" width="1" height="1380" fill="#9a9a9a"/>
<rect x="2121" y="158" width="25" height="340" fill="#c1c1c1"/>
<path d="M2127,19 L2140.5,19 L2133.75,12 Z" fill="#505050"/>
<path d="M2127,1362 L2140.5,1362 L2133.75,1369 Z" fill="#505050"/>
</svg>
</body></html>
